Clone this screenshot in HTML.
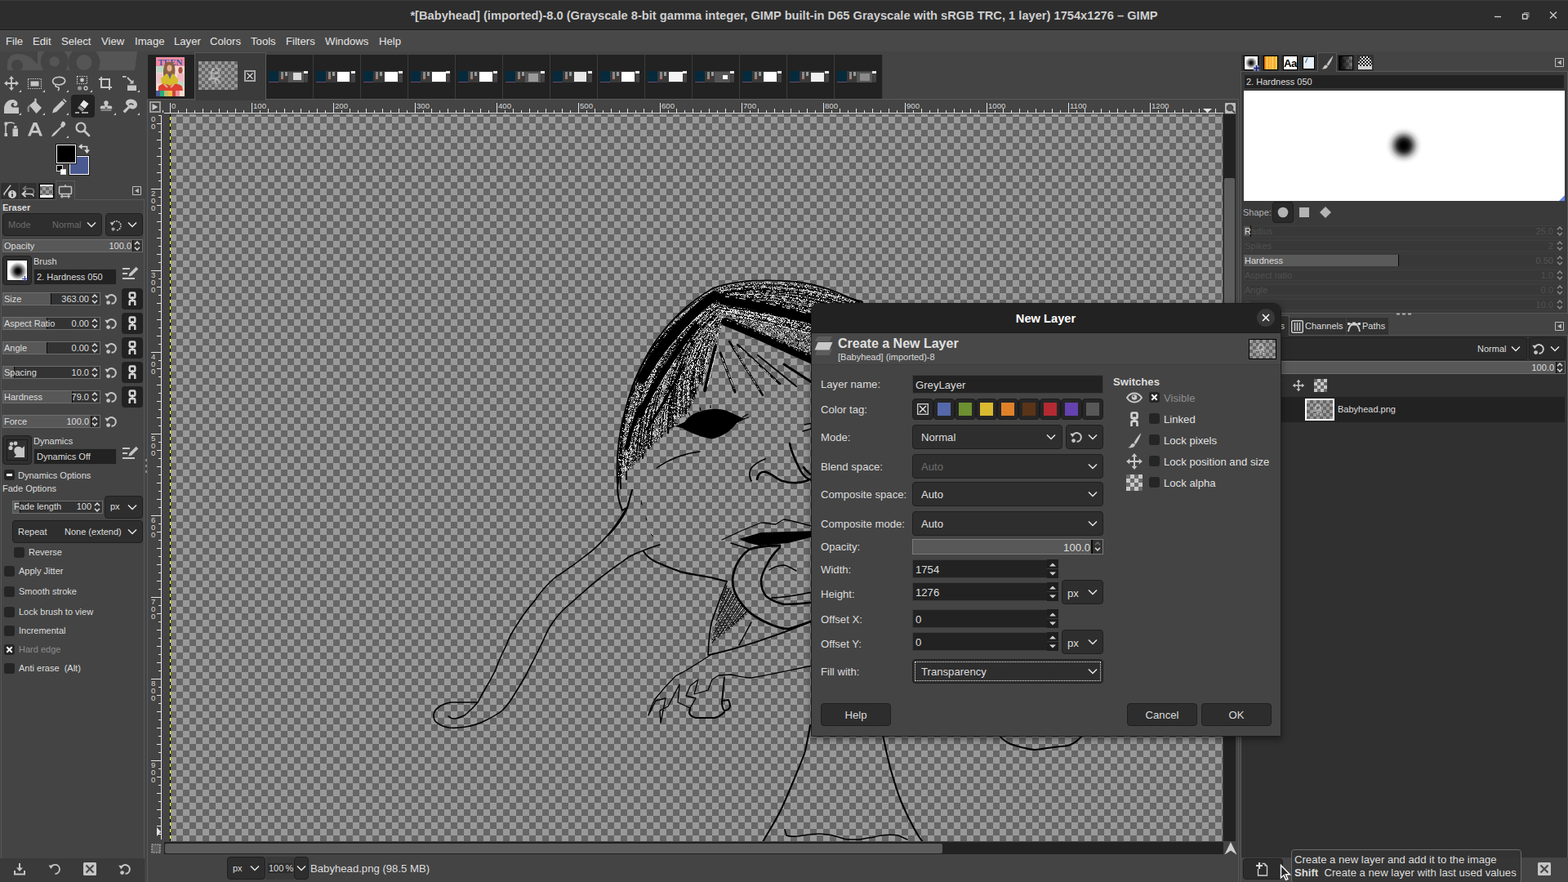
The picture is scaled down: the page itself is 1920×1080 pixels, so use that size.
<!DOCTYPE html>
<html lang="en">
<head>
<meta charset="utf-8">
<title>GIMP</title>
<style>
*{box-sizing:border-box;margin:0;padding:0}
html,body{width:1920px;height:1080px;overflow:hidden;background:#444}
body{position:relative;font-family:"Liberation Sans",sans-serif;font-size:13.150px;color:#dcdcdc;line-height:1;-webkit-font-smoothing:antialiased}
.abs{position:absolute}
.t{position:absolute;white-space:nowrap;line-height:1}
.s11{font-size:11px}
.b{font-weight:bold}
svg{position:absolute;overflow:visible}
/* title bar */
#titlebar{position:absolute;left:0;top:0;width:1920px;height:37px;background:#2d2d2d;border-top:1px solid #3b3b3b;border-bottom:1px solid #1c1c1c}
#titlebar .title{position:absolute;left:0;width:1920px;top:11px;text-align:center;font-weight:bold;font-size:14.67px;color:#cfcfcf;white-space:nowrap}
/* menubar */
#menubar{position:absolute;left:0;top:37px;width:1920px;height:26px;background:#484848;border-top:1px solid #4c4c4c}
#menubar span{position:absolute;top:6px;font-size:13.150px;color:#e4e4e4;white-space:nowrap}
/* generic widgets */
.combo{position:absolute;background:#2e2e2e;border:1px solid #1f1f1f;border-radius:4px}
.entry{position:absolute;background:#222;border:1px solid #3c3c3c}
.scale{position:absolute;background:#333;border:1px solid #6e6e6e}
.scale .fill{position:absolute;left:0;top:0;bottom:0;background:#585858}
.scale .cur{position:absolute;top:0;bottom:0;width:1px;background:#0a0a0a}
.cb{position:absolute;width:13px;height:13px;background:#252525;border-radius:3px}
.btn{position:absolute;background:#2d2d2d;border:1px solid #1f1f1f;border-radius:4px;text-align:center}

/* toolbox */
#toolbox{position:absolute;left:0;top:0}
.ic{fill:#c6c6c6}
.row{position:absolute;left:3px;width:120px;height:16px}
.lbl{position:absolute;left:1px;top:2px;font-size:11px;white-space:nowrap;color:#dcdcdc}
.val{position:absolute;right:13px;top:2px;font-size:11px;white-space:nowrap;color:#dcdcdc}
.linkb{position:absolute;left:149px;width:26px;height:26px;background:#222;border-radius:4px}
.chk{position:absolute;font-size:11px;white-space:nowrap;color:#dcdcdc}
.vr{width:6px;white-space:normal;word-break:break-all;line-height:9px;font-size:9.600px;color:#d6d6d6}
</style>
</head>
<body>
<svg width="0" height="0" style="position:absolute"><defs>
<symbol id="chev" viewBox="0 0 12 8"><path d="M1 1.5l5 5 5-5" fill="none" stroke="#e6e6e6" stroke-width="1.5"/></symbol>
<symbol id="spin" viewBox="0 0 10 14"><path d="M2 5.200l3-3 3 3M2 8.800l3 3 3-3" fill="none" stroke="#d8d8d8" stroke-width="1.600"/></symbol>
<symbol id="reset" viewBox="0 0 16 16"><path d="M3.400 6.400A5.400 5.400 0 1 1 8.500 13.800" fill="none" stroke="#c6c6c6" stroke-width="2"/><path d="M0.300 3.800l6 .3-3 4.400z" fill="#c6c6c6"/><circle cx="4.600" cy="12.600" r="2.400" fill="#c6c6c6"/></symbol>
<symbol id="chain" viewBox="0 0 10 18"><rect x="1.500" y="1.500" width="7" height="6.600" rx="1.300" fill="none" stroke="#d4d4d4" stroke-width="2.600"/><path d="M1.500 18V13.600Q1.500 11.600 3.500 11.600H6.500Q8.500 11.600 8.500 13.600V18" fill="none" stroke="#d4d4d4" stroke-width="2.600"/><path d="M5 6.500V13" stroke="#d4d4d4" stroke-width="2.200"/></symbol>
<symbol id="edit" viewBox="0 0 22 20"><path d="M1 4h9M1 10h6M1 16h15" stroke="#c6c6c6" stroke-width="2.2" fill="none"/><path d="M8.5 13.6l1-3.6 8.2-8.2 2.6 2.6-8.200 8.200z" fill="#c6c6c6"/></symbol>
<symbol id="menub" viewBox="0 0 11 11"><path d="M.5.5h10v10h-10z" fill="none" stroke="#bdbdbd"/><path d="M7.8 2.6v5.800l-4.600-2.900z" fill="#bdbdbd"/></symbol>
<pattern id="ck4" width="8" height="8" patternUnits="userSpaceOnUse"><rect width="8" height="8" fill="#666"/><rect width="4" height="4" fill="#999"/><rect x="4" y="4" width="4" height="4" fill="#999"/></pattern><pattern id="ck4d" width="8" height="8" patternUnits="userSpaceOnUse"><rect width="8" height="8" fill="#565656"/><rect width="4" height="4" fill="#7c7c7c"/><rect x="4" y="4" width="4" height="4" fill="#7c7c7c"/></pattern>
</defs></svg>
<!-- TITLEBAR -->
<div id="titlebar">
<div class="title">*[Babyhead] (imported)-8.0 (Grayscale 8-bit gamma integer, GIMP built-in D65 Grayscale with sRGB TRC, 1 layer) 1754x1276 – GIMP</div>
<svg style="left:1824px;top:7px" width="90" height="22" viewBox="0 0 90 22"><g stroke="#d0d0d0" stroke-width="1.300" fill="none"><path d="M6 12.500h8"/><path d="M40.500 9.500h5.500v5.500h-5.500z"/><path d="M42.500 9.500v-2h5.500v5.500h-2" stroke="#9a9a9a" stroke-width="1"/><path d="M74 6.500l8 8M82 6.500l-8 8"/></g></svg>
</div>
<!-- MENUBAR -->
<div id="menubar">
<span style="left:7px">File</span><span style="left:40px">Edit</span><span style="left:75px">Select</span><span style="left:124px">View</span><span style="left:165px">Image</span><span style="left:213px">Layer</span><span style="left:257px">Colors</span><span style="left:307px">Tools</span><span style="left:350px">Filters</span><span style="left:398px">Windows</span><span style="left:464px">Help</span>
</div>
<!--TOOLBOX-->
<div id="toolbox">
<!-- wilber drop area -->
<svg style="left:0;top:63px" width="178" height="23" viewBox="0 63 178 23"><defs><clipPath id="wc"><rect x="0" y="63" width="178" height="23"/></clipPath></defs><g clip-path="url(#wc)"><path d="M46 63H168L165 86H46z" fill="#555"/><path d="M9 86V80Q9 66 22 66Q35 66 43 76L54 86z" fill="#555"/><circle cx="21" cy="80" r="7" fill="#444"/><circle cx="66.700" cy="75.400" r="17" fill="#444"/><circle cx="66.700" cy="75.400" r="6.200" fill="#555"/><circle cx="103" cy="76.500" r="19.500" fill="#444"/><circle cx="103" cy="76.500" r="9.500" fill="#555"/></g></svg>
<!-- selected tool bg -->
<div class="abs" style="left:87px;top:116px;width:29px;height:28px;background:#222;border-radius:4px"></div>
<!-- row1 -->
<svg style="left:4px;top:92px" width="20" height="20" viewBox="0 0 20 20"><path class="ic" d="M10 1l3.200 3.800h-2.300v4.300h4.300V6.800L19 10l-3.800 3.200v-2.300h-4.300v4.300h2.300L10 19l-3.200-3.800h2.300v-4.300H4.800v2.300L1 10l3.800-3.200v2.300h4.300V4.800H6.800z"/></svg>
<svg style="left:33px;top:92px" width="20" height="20" viewBox="0 0 20 20"><rect x="1.500" y="4.500" width="16" height="12" fill="none" stroke="#c6c6c6" stroke-width="1.200" stroke-dasharray="1.500 1.200"/><rect class="ic" x="4.500" y="7.500" width="10" height="6"/></svg>
<svg style="left:62px;top:92px" width="20" height="20" viewBox="0 0 20 20"><path d="M6.500 11.500C1 10 1 3.500 9 2.500c8-1 10.500 4.500 7 7.500-2.500 2-6 2.200-8.500 1.500-2.500-.5-2 3 .5 3s3 2.500 1 4.500" fill="none" stroke="#c6c6c6" stroke-width="1.700"/></svg>
<svg style="left:91px;top:92px" width="20" height="20" viewBox="0 0 20 20"><rect x="3.500" y="1.500" width="12" height="9" fill="none" stroke="#c6c6c6" stroke-width="1.200" stroke-dasharray="1.500 1.200"/><circle class="ic" cx="9.500" cy="6" r="2.400"/><circle cx="6.500" cy="16" r="2.500" fill="#9a9a9a"/><circle cx="14" cy="16" r="2" fill="none" stroke="#c6c6c6" stroke-width="1.300"/></svg>
<svg style="left:119px;top:92px" width="20" height="20" viewBox="0 0 20 20"><path d="M5 2v13h13M2 5h13v13" fill="none" stroke="#c6c6c6" stroke-width="2"/></svg>
<svg style="left:148px;top:92px" width="20" height="20" viewBox="0 0 20 20"><path class="ic" d="M2 1h4.500v1.800H2zM8 12.500h11V19H8z"/><path d="M8 3l6 6" stroke="#c6c6c6" stroke-width="1.800" fill="none"/><path class="ic" d="M15.500 5.500v5h-5z"/></svg>
<!-- row2 -->
<svg style="left:4px;top:120px" width="20" height="20" viewBox="0 0 20 20"><path class="ic" d="M1 19V11.500C2 6 6 2 11 2c4 0 6.500 2.500 6.500 5 0 2-1.500 3-3 3-1.200 0-2-.8-2-1.800 0-1 .7-1.500 1.500-1.500-1-1-3-1-4 .5-1 1.500-.5 3.500 1.500 4.300H19V19z"/></svg>
<svg style="left:33px;top:120px" width="20" height="20" viewBox="0 0 20 20"><path class="ic" d="M3 9l6.500-5.500L18 12l-6.500 7z"/><path d="M10.500 1.500v9" stroke="#c6c6c6" stroke-width="2.200" stroke-linecap="round"/><path d="M3.500 9.500c-2 1.500-2.500 4-1.500 7.500" stroke="#8a8a8a" stroke-width="2.400" fill="none"/></svg>
<svg style="left:62px;top:120px" width="20" height="20" viewBox="0 0 20 20"><path class="ic" d="M2 18.500l1.500-5L14 3l3.500 3.500L7 17zM15 2l1.200-1.200 3.500 3.500L18.500 5.500z"/></svg>
<svg style="left:91px;top:120px" width="20" height="20" viewBox="0 0 20 20"><path d="M11.500 2.500l6 4.500-4.500 6-6-4.500z" fill="#e8e8e8"/><path d="M6.300 9.300l6 4.500-2.300 3-6-4.500z" fill="#8c8c8c"/><path d="M1 18h5M9 18h8" stroke="#d0d0d0" stroke-width="1.500"/></svg>
<svg style="left:122px;top:122px" width="16" height="16" viewBox="0 0 20 20"><path class="ic" d="M10 1.500c2.200 0 3.500 1.600 3.500 3.500 0 1.800-1.500 2.500-1.500 4.500h4.500c1.500 0 2.500 1 2.500 2.500V14H1v-2c0-1.500 1-2.500 2.500-2.500H8C8 7.500 6.500 6.800 6.500 5c0-1.900 1.300-3.500 3.500-3.500zM2 15.500h16V17H2z"/><path d="M7.500 11.500h5l-2.500 2.500z" fill="#484848"/></svg>
<svg style="left:149px;top:120px" width="20" height="20" viewBox="0 0 20 20"><path class="ic" d="M11 1.500c5 0 8 3 8 6.500s-3 5.500-6 5.500c-1.500 0-2-1-3.500-1L4 18.500 1.500 16 8 10c-1-1-3-1.500-3-4 0-2.500 2.500-4.500 6-4.500z"/><path d="M9 8c1.500-1 4-1 5.500.5" stroke="#484848" stroke-width="1.500" fill="none"/></svg>
<!-- row3 -->
<svg style="left:4px;top:148px" width="20" height="20" viewBox="0 0 20 20"><path d="M3 17V4c3-2.500 8-2.500 11-.5" fill="none" stroke="#c6c6c6" stroke-width="1.500"/><path class="ic" d="M1.500 1.500h3.500v4H1.500zM1.500 15h3.500v4H1.500zM11.500 9.500h6.500V19h-6.500zM13 6h3.500v3H13z"/></svg>
<svg style="left:33px;top:148px" width="20" height="20" viewBox="0 0 20 20"><path class="ic" d="M7.800 2h4.400L19 18.500h-3.600l-1.400-3.800H6l-1.400 3.800H1zM10 5.500l-2.900 6.400h5.800z"/></svg>
<svg style="left:62px;top:148px" width="20" height="20" viewBox="0 0 20 20"><path class="ic" d="M14 1c2-1.200 5 1.500 4 4l-3 3.500-1-1-8.500 9.500c-1 1-2.500 1.500-3.500 2.500l-1-1c1-1 1.500-2.500 2.500-3.500l9.500-8.500-1-1z"/></svg>
<svg style="left:91px;top:148px" width="20" height="20" viewBox="0 0 20 20"><circle cx="8" cy="8" r="5.500" fill="none" stroke="#c6c6c6" stroke-width="2.200"/><path d="M12 12l6 6" stroke="#c6c6c6" stroke-width="2.800" stroke-linecap="round"/></svg>
<!-- group corner marks -->
<svg style="left:0;top:63px" width="178" height="120" viewBox="0 0 178 120"><g fill="#c6c6c6"><path d="M26 47v3h-3zM55 47v3h-3zM84 47v3h-3zM113 47v3h-3zM171 47v3h-3zM26 75v3h-3zM55 75v3h-3zM84 75v3h-3zM142 75v3h-3zM171 75v3h-3zM84 103v3h-3z"/></g></svg>
<!-- fg/bg -->
<div class="abs" style="left:85px;top:191px;width:24px;height:23px;background:#4a5a90;border:1px solid #fff;outline:1px solid #1a1a1a"></div>
<div class="abs" style="left:69px;top:177px;width:24px;height:23px;background:#000;border:1px solid #fff;outline:1px solid #1a1a1a"></div>
<svg style="left:96px;top:176px" width="14" height="12" viewBox="0 0 14 12"><path d="M3 3.500h7.500V11" fill="none" stroke="#d8d8d8" stroke-width="1.600"/><path d="M4.500 0v7L0 3.500zM7 7.500h7L10.500 12z" fill="#d8d8d8"/></svg>
<div class="abs" style="left:69px;top:202px;width:8px;height:8px;background:#000;border:1px solid #ddd"></div>
<div class="abs" style="left:74px;top:207px;width:7px;height:7px;background:#fff;border:1px solid #ddd"></div>
<!-- tool option tabs -->
<div class="abs" style="left:1px;top:224px;width:67px;height:21px;background:#303030"></div>
<div class="abs" style="left:23px;top:224px;width:1px;height:21px;background:#444"></div>
<div class="abs" style="left:45px;top:224px;width:1px;height:21px;background:#484848"></div>
<div class="abs" style="left:1px;top:244px;width:176px;height:836px;border:1px solid #585858;border-bottom:none"></div>
<div class="abs" style="left:68px;top:221px;width:24px;height:24px;background:#444;border:1px solid #5a5a5a;border-bottom:none"></div>
<svg style="left:3px;top:226px" width="18" height="18" viewBox="0 0 18 18"><path d="M1.500 12L10 .8" stroke="#c6c6c6" stroke-width="1.600"/><path d="M1 14l1.500-2.500 1 .8z" fill="#c6c6c6"/><circle cx="12" cy="12" r="5" fill="#d0d0d0"/><path d="M12 11v4M12 8.500v1.300" stroke="#303030" stroke-width="1.700"/></svg>
<svg style="left:26px;top:227px" width="18" height="16" viewBox="0 0 18 16"><path d="M3.500 4h8c3 0 4 2 4 3.500s-1 3.500-4 3.500" fill="none" stroke="#777" stroke-width="1.700"/><path d="M6 .8L2.500 4 6 7.200" fill="none" stroke="#777" stroke-width="1.700"/><path d="M2 10.500h9c3 0 4 1 4 3" fill="none" stroke="#d0d0d0" stroke-width="1.700"/><path d="M5.500 7L1.500 10.500l4 3.500" fill="none" stroke="#d0d0d0" stroke-width="1.700"/></svg>
<svg style="left:48px;top:225px" width="18" height="18" viewBox="0 0 18 18"><rect x="0" y="0" width="18" height="18" fill="#000"/><rect x="1" y="1" width="16" height="16" fill="#fff"/><rect x="1" y="3" width="16" height="11" fill="url(#ck4)"/></svg>
<svg style="left:71px;top:225px" width="18" height="18" viewBox="0 0 18 18"><rect x="1.500" y="3.500" width="15" height="9" rx="1" fill="none" stroke="#c6c6c6" stroke-width="1.500"/><path d="M3 15.500h12M5 12.500v5M13 12.500v5M9 1v2.500" stroke="#c6c6c6" stroke-width="1.400" fill="none"/></svg>
<svg style="left:162px;top:228px" width="11" height="11"><use href="#menub"/></svg>
<div class="t s11 b" style="left:3px;top:249px">Eraser</div>
<!-- mode combo -->
<div class="combo" style="left:3px;top:261px;width:122px;height:28px"></div>
<div class="t s11" style="left:10px;top:270px;color:#6c6c6c">Mode</div>
<div class="t s11" style="left:64px;top:270px;color:#6c6c6c">Normal</div>
<svg style="left:106px;top:271px" width="12" height="8"><use href="#chev"/></svg>
<div class="combo" style="left:129px;top:261px;width:46px;height:28px"></div>
<svg style="left:134px;top:268px" width="16" height="16" viewBox="0 0 16 16"><path d="M3.200 6.200A5.600 5.600 0 1 1 8.500 14" fill="none" stroke="#c6c6c6" stroke-width="1.600" stroke-dasharray="2 1"/><path d="M0.600 4.200l5.200.2-2.600 3.900z" fill="#c6c6c6"/><circle cx="4.600" cy="12.600" r="2.100" fill="#a0a0a0"/></svg>
<svg style="left:156px;top:271px" width="12" height="8"><use href="#chev"/></svg>
<!-- opacity -->
<div class="scale" style="left:3px;top:293px;width:172px;height:16px"><div class="fill" style="width:158px"></div><div class="cur" style="left:158px"></div><div class="lbl">Opacity</div><div class="val">100.0</div></div>
<svg style="left:163px;top:294px" width="10" height="14"><use href="#spin"/></svg>
<!-- brush -->
<div class="combo" style="left:3px;top:313px;width:36px;height:36px"></div>
<div class="abs" style="left:8px;top:318px;width:26px;height:26px;background:radial-gradient(circle at 13px 13px,#000 0,#111 3px,#fff 11px) #fff;border:1px solid #1a1a1a"></div>
<svg style="left:27px;top:338px" width="7" height="7" viewBox="0 0 7 7"><path d="M3.500 0v7M0 3.500h7" stroke="#2a3a9a" stroke-width="1.200"/></svg>
<div class="t s11" style="left:41px;top:315px">Brush</div>
<div class="entry" style="left:41px;top:329px;width:102px;height:20px;border-color:#404040"></div>
<div class="t s11" style="left:45px;top:334px">2. Hardness 050</div>
<svg style="left:149px;top:325px" width="22" height="20"><use href="#edit"/></svg>
<div class="scale" style="left:3px;top:358px;width:120px;height:16px"><div class="fill" style="width:58px"></div><div class="cur" style="left:58px"></div><div class="lbl">Size</div><div class="val">363.00</div></div>
<svg style="left:111px;top:359px" width="10" height="14"><use href="#spin"/></svg>
<svg style="left:128px;top:358px" width="16" height="16"><use href="#reset"/></svg>
<div class="linkb" style="top:353px"></div><svg style="left:157px;top:357px" width="10" height="17"><use href="#chain"/></svg>
<div class="scale" style="left:3px;top:388px;width:120px;height:16px"><div class="fill" style="width:53px"></div><div class="cur" style="left:53px"></div><div class="lbl">Aspect Ratio</div><div class="val">0.00</div></div>
<svg style="left:111px;top:389px" width="10" height="14"><use href="#spin"/></svg>
<svg style="left:128px;top:388px" width="16" height="16"><use href="#reset"/></svg>
<div class="linkb" style="top:383px"></div><svg style="left:157px;top:387px" width="10" height="17"><use href="#chain"/></svg>
<div class="scale" style="left:3px;top:418px;width:120px;height:16px"><div class="fill" style="width:53px"></div><div class="cur" style="left:53px"></div><div class="lbl">Angle</div><div class="val">0.00</div></div>
<svg style="left:111px;top:419px" width="10" height="14"><use href="#spin"/></svg>
<svg style="left:128px;top:418px" width="16" height="16"><use href="#reset"/></svg>
<div class="linkb" style="top:413px"></div><svg style="left:157px;top:417px" width="10" height="17"><use href="#chain"/></svg>
<div class="scale" style="left:3px;top:448px;width:120px;height:16px"><div class="fill" style="width:13px"></div><div class="cur" style="left:13px"></div><div class="lbl">Spacing</div><div class="val">10.0</div></div>
<svg style="left:111px;top:449px" width="10" height="14"><use href="#spin"/></svg>
<svg style="left:128px;top:448px" width="16" height="16"><use href="#reset"/></svg>
<div class="linkb" style="top:443px"></div><svg style="left:157px;top:447px" width="10" height="17"><use href="#chain"/></svg>
<div class="scale" style="left:3px;top:478px;width:120px;height:16px"><div class="fill" style="width:84px"></div><div class="cur" style="left:84px"></div><div class="lbl">Hardness</div><div class="val">79.0</div></div>
<svg style="left:111px;top:479px" width="10" height="14"><use href="#spin"/></svg>
<svg style="left:128px;top:478px" width="16" height="16"><use href="#reset"/></svg>
<div class="linkb" style="top:473px"></div><svg style="left:157px;top:477px" width="10" height="17"><use href="#chain"/></svg>
<div class="scale" style="left:3px;top:508px;width:120px;height:16px"><div class="fill" style="width:107px"></div><div class="cur" style="left:107px"></div><div class="lbl">Force</div><div class="val">100.0</div></div>
<svg style="left:111px;top:509px" width="10" height="14"><use href="#spin"/></svg>
<svg style="left:128px;top:508px" width="16" height="16"><use href="#reset"/></svg>
<div class="combo" style="left:3px;top:533px;width:36px;height:36px"></div>
<div class="abs" style="left:8px;top:538px;width:26px;height:26px;background:#303030;border:1px solid #1a1a1a"></div>
<svg style="left:9px;top:539px" width="24" height="24" viewBox="0 0 24 24"><g fill="#c6c6c6"><circle cx="5" cy="4.500" r="2.300"/><circle cx="10" cy="4" r="2.400"/><circle cx="4" cy="9.500" r="2.600"/><path d="M9 10c2-3 7-3 9 0l3-3v14H8l3-3c-2.500-2-3.500-5-2-8z"/></g></svg>
<div class="t s11" style="left:41px;top:535px">Dynamics</div>
<div class="entry" style="left:41px;top:549px;width:102px;height:20px;border-color:#404040"></div>
<div class="t s11" style="left:45px;top:554px">Dynamics Off</div>
<svg style="left:149px;top:545px" width="22" height="20"><use href="#edit"/></svg>
<div class="abs" style="left:5px;top:575px;width:13px;height:13px;background:#252525;border-radius:3px"></div>
<div class="abs" style="left:8px;top:580px;width:7px;height:3px;background:#fff"></div>
<div class="t s11" style="left:22px;top:577px">Dynamics Options</div>
<div class="t s11" style="left:3px;top:593px">Fade Options</div>
<div class="scale" style="left:15px;top:613px;width:111px;height:16px"><div class="fill" style="width:8px"></div><div class="cur" style="left:8px"></div><div class="lbl" style="top:1px">Fade length</div><div class="val" style="top:1px">100</div></div>
<svg style="left:114px;top:614px" width="10" height="14"><use href="#spin"/></svg>
<div class="combo" style="left:128px;top:607px;width:47px;height:28px"></div>
<div class="t s11" style="left:135px;top:615px">px</div>
<svg style="left:156px;top:617px" width="12" height="8"><use href="#chev"/></svg>
<div class="combo" style="left:15px;top:637px;width:160px;height:28px"></div>
<div class="t s11" style="left:22px;top:646px">Repeat</div>
<div class="t s11" style="left:79px;top:646px">None (extend)</div>
<svg style="left:156px;top:647px" width="12" height="8"><use href="#chev"/></svg>

<div class="cb" style="left:17px;top:670px"></div>
<div class="chk" style="left:35px;top:671px;color:#dcdcdc">Reverse</div>
<div class="cb" style="left:5px;top:693px"></div>
<div class="chk" style="left:23px;top:694px;color:#dcdcdc">Apply Jitter</div>
<div class="cb" style="left:5px;top:718px"></div>
<div class="chk" style="left:23px;top:719px;color:#dcdcdc">Smooth stroke</div>
<div class="cb" style="left:5px;top:743px"></div>
<div class="chk" style="left:23px;top:744px;color:#dcdcdc">Lock brush to view</div>
<div class="cb" style="left:5px;top:766px"></div>
<div class="chk" style="left:23px;top:767px;color:#dcdcdc">Incremental</div>
<div class="cb" style="left:5px;top:789px"></div>
<svg style="left:5px;top:789px" width="13" height="13" viewBox="0 0 13 13"><path d="M3.300 3.300l6.400 6.400M9.700 3.300l-6.400 6.400" stroke="#fff" stroke-width="2"/></svg>
<div class="chk" style="left:23px;top:790px;color:#8c8c8c">Hard edge</div>
<div class="cb" style="left:5px;top:812px"></div>
<div class="chk" style="left:23px;top:813px;color:#dcdcdc">Anti erase&nbsp; (Alt)</div>
<div class="abs" style="left:0;top:1051px;width:177px;height:29px;background:#3a3a3a"></div>
<svg style="left:16px;top:1056px" width="16" height="16" viewBox="0 0 16 16"><path d="M8 1v7" stroke="#c6c6c6" stroke-width="2"/><path d="M4 6.500h8L8 11z" fill="#c6c6c6"/><path d="M2 10v4.500h12V10" fill="none" stroke="#c6c6c6" stroke-width="2"/></svg>
<svg style="left:59px;top:1056px" width="16" height="16" viewBox="0 0 16 16"><path d="M3.200 6.200A5.600 5.600 0 1 1 8.500 14" fill="none" stroke="#c6c6c6" stroke-width="1.800"/><path d="M0.600 3.500l5.600.2-2.800 4.200z" fill="#c6c6c6"/></svg>
<svg style="left:102px;top:1056px" width="16" height="16" viewBox="0 0 16 16"><rect x="0" y="0" width="16" height="16" rx="1.500" fill="#c6c6c6"/><path d="M3.500 3.500l9 9M12.500 3.500l-9 9" stroke="#484848" stroke-width="2.200"/></svg>
<svg style="left:145px;top:1056px" width="16" height="16"><use href="#reset"/></svg>
</div>
<svg style="left:178px;top:562px" width="3" height="18" viewBox="0 0 3 18"><path d="M0 0h2v3h-2zM0 7h2v3h-2zM0 14h2v3h-2z" fill="#8a8a8a"/></svg>
<!--/TOOLBOX-->
<!--IMAGETABS-->
<div id="imgtabs">
<div class="abs" style="left:180px;top:121px;width:1336px;height:959px;background:#444;border-left:1px solid #5a5a5a;border-top:1px solid #5a5a5a"></div>
<div class="abs" style="left:181px;top:67px;width:899px;height:54px;background:#222"></div>
<div class="abs" style="left:325px;top:67px;width:1px;height:54px;background:#3c3c3c"></div>
<div class="abs" style="left:383px;top:67px;width:1px;height:54px;background:#3c3c3c"></div>
<div class="abs" style="left:441px;top:67px;width:1px;height:54px;background:#3c3c3c"></div>
<div class="abs" style="left:499px;top:67px;width:1px;height:54px;background:#3c3c3c"></div>
<div class="abs" style="left:557px;top:67px;width:1px;height:54px;background:#3c3c3c"></div>
<div class="abs" style="left:615px;top:67px;width:1px;height:54px;background:#3c3c3c"></div>
<div class="abs" style="left:673px;top:67px;width:1px;height:54px;background:#3c3c3c"></div>
<div class="abs" style="left:731px;top:67px;width:1px;height:54px;background:#3c3c3c"></div>
<div class="abs" style="left:789px;top:67px;width:1px;height:54px;background:#3c3c3c"></div>
<div class="abs" style="left:847px;top:67px;width:1px;height:54px;background:#3c3c3c"></div>
<div class="abs" style="left:905px;top:67px;width:1px;height:54px;background:#3c3c3c"></div>
<div class="abs" style="left:963px;top:67px;width:1px;height:54px;background:#3c3c3c"></div>
<div class="abs" style="left:1021px;top:67px;width:1px;height:54px;background:#3c3c3c"></div>
<div class="abs" style="left:1080px;top:67px;width:1px;height:54px;background:#3c3c3c"></div>
<div class="abs" style="left:238px;top:64px;width:88px;height:59px;background:#3b3b3b;border:1px solid #5a5a5a;border-bottom:none"></div>
<svg style="left:191px;top:70px" width="35" height="48" viewBox="0 0 35 48"><rect width="35" height="48" fill="#f3d9d2"/><rect x="0" y="0" width="35" height="11" fill="#f08aa2"/><text x="17.500" y="9.600" text-anchor="middle" font-family="Liberation Serif,serif" font-weight="bold" font-size="10.500" textLength="30" lengthAdjust="spacingAndGlyphs" fill="#3b55a6">TEEN</text><rect x="1" y="11" width="10" height="8" fill="#9fd6c0" opacity=".7"/><rect x="1" y="20" width="7" height="12" fill="#e8b0c8" opacity=".6"/><rect x="26" y="20" width="8" height="10" fill="#f0a8b8" opacity=".7"/><rect x="26" y="30" width="8" height="6" fill="#a8d8c0" opacity=".7"/><path d="M11 8c-2 5-3 12-1 18l5 2 6-2c3-5 3-12 1-18-3-3-8-3-11 0z" fill="#8a6040"/><ellipse cx="16.500" cy="13.500" rx="3" ry="4" fill="#e2b090"/><ellipse cx="30" cy="16" rx="2.600" ry="4" fill="#a55040"/><path d="M6 26l7-6 4 3 4-3 6 7-1 11H8z" fill="#d4bc2c"/><path d="M15 21l2 6 2-6z" fill="#4a5aa0"/><path d="M3 36c4-4 9-4 14-1 5-3 11-3 15 1l1 5H3z" fill="#dc4030"/><path d="M10 33l4 4M22 33l-4 4" stroke="#e2b090" stroke-width="2"/><rect x="0" y="41" width="5" height="7" fill="#4a5796"/><rect x="5" y="41" width="5" height="7" fill="#27ad78"/><rect x="10" y="41" width="5" height="7" fill="#c4bb6e"/><rect x="15" y="41" width="5" height="7" fill="#f0bd44"/><rect x="20" y="41" width="4" height="7" fill="#c9473c"/><rect x="24" y="41" width="5" height="7" fill="#f4909c"/><rect x="29" y="41" width="6" height="7" fill="#f2dfd0"/></svg>
<svg style="left:243px;top:75px" width="48" height="35" viewBox="0 0 48 35"><rect width="48" height="35" fill="url(#ck4)"/><path d="M19 9c-3 2-4 6-3 10M21 8c3 1 5 4 4 8M16 14c2 1 5 1 8 0M14 19c3 2 8 2 12 0M12 22c4-1 8-1 13 1M20 23l2 5M24 24l3 1" stroke="#c8c8c8" stroke-width="1.600" fill="none" opacity=".75"/></svg>
<svg style="left:299px;top:86px" width="14" height="14" viewBox="0 0 14 14"><rect x="1" y="1" width="12" height="12" fill="#333" stroke="#a8a8a8" stroke-width="2"/><path d="M3.500 3.500l7 7M10.500 3.500l-7 7" stroke="#d8d8d8" stroke-width="1.300"/></svg>
<svg style="left:329px;top:87px" width="48" height="14" viewBox="0 0 48 14"><rect width="48" height="14" fill="#3a3a3a"/><rect width="12" height="13" fill="#062a3c"/><rect x="0" y="13" width="12" height="1" fill="#6a4a6a"/><rect x="15" y="1" width="3" height="9" fill="#8a8a8a"/><rect x="20" y="1" width="3" height="5" fill="#9a9a9a"/><rect x="16" y="8" width="1.500" height="2" fill="#e06030"/><rect x="24" y="1" width="19" height="13" fill="#555"/><rect x="30" y="2" width="10" height="9" fill="#d8d8d8"/><rect x="43" y="0" width="5" height="3" fill="#e8e8e8"/><rect x="44" y="4" width="4" height="9" fill="#444"/></svg>
<svg style="left:387px;top:87px" width="48" height="14" viewBox="0 0 48 14"><rect width="48" height="14" fill="#3a3a3a"/><rect width="12" height="13" fill="#062a3c"/><rect x="0" y="13" width="12" height="1" fill="#6a4a6a"/><rect x="15" y="1" width="3" height="9" fill="#8a8a8a"/><rect x="20" y="1" width="3" height="5" fill="#9a9a9a"/><rect x="16" y="8" width="1.500" height="2" fill="#e06030"/><rect x="26" y="1" width="15" height="12" fill="#fff"/><rect x="43" y="0" width="5" height="3" fill="#e8e8e8"/><rect x="44" y="4" width="4" height="9" fill="#444"/></svg>
<svg style="left:445px;top:87px" width="48" height="14" viewBox="0 0 48 14"><rect width="48" height="14" fill="#3a3a3a"/><rect width="12" height="13" fill="#062a3c"/><rect x="0" y="13" width="12" height="1" fill="#6a4a6a"/><rect x="15" y="1" width="3" height="9" fill="#8a8a8a"/><rect x="20" y="1" width="3" height="5" fill="#9a9a9a"/><rect x="16" y="8" width="1.500" height="2" fill="#e06030"/><rect x="26" y="1" width="16" height="12" fill="#fff"/><rect x="43" y="0" width="5" height="3" fill="#e8e8e8"/><rect x="44" y="4" width="4" height="9" fill="#444"/></svg>
<svg style="left:503px;top:87px" width="48" height="14" viewBox="0 0 48 14"><rect width="48" height="14" fill="#3a3a3a"/><rect width="12" height="13" fill="#062a3c"/><rect x="0" y="13" width="12" height="1" fill="#6a4a6a"/><rect x="15" y="1" width="3" height="9" fill="#8a8a8a"/><rect x="20" y="1" width="3" height="5" fill="#9a9a9a"/><rect x="16" y="8" width="1.500" height="2" fill="#e06030"/><rect x="26" y="1" width="17" height="12" fill="#fff"/><rect x="43" y="0" width="5" height="3" fill="#e8e8e8"/><rect x="44" y="4" width="4" height="9" fill="#444"/></svg>
<svg style="left:561px;top:87px" width="48" height="14" viewBox="0 0 48 14"><rect width="48" height="14" fill="#3a3a3a"/><rect width="12" height="13" fill="#062a3c"/><rect x="0" y="13" width="12" height="1" fill="#6a4a6a"/><rect x="15" y="1" width="3" height="9" fill="#8a8a8a"/><rect x="20" y="1" width="3" height="5" fill="#9a9a9a"/><rect x="16" y="8" width="1.500" height="2" fill="#e06030"/><rect x="26" y="1" width="16" height="12" fill="#fff"/><rect x="43" y="0" width="5" height="3" fill="#e8e8e8"/><rect x="44" y="4" width="4" height="9" fill="#444"/></svg>
<svg style="left:619px;top:87px" width="48" height="14" viewBox="0 0 48 14"><rect width="48" height="14" fill="#3a3a3a"/><rect width="12" height="13" fill="#062a3c"/><rect x="0" y="13" width="12" height="1" fill="#6a4a6a"/><rect x="15" y="1" width="3" height="9" fill="#8a8a8a"/><rect x="20" y="1" width="3" height="5" fill="#9a9a9a"/><rect x="16" y="8" width="1.500" height="2" fill="#e06030"/><rect x="24" y="1" width="19" height="13" fill="#555"/><rect x="28" y="3" width="12" height="10" fill="#9a9a9a"/><rect x="43" y="0" width="5" height="3" fill="#e8e8e8"/><rect x="44" y="4" width="4" height="9" fill="#444"/></svg>
<svg style="left:677px;top:87px" width="48" height="14" viewBox="0 0 48 14"><rect width="48" height="14" fill="#3a3a3a"/><rect width="12" height="13" fill="#062a3c"/><rect x="0" y="13" width="12" height="1" fill="#6a4a6a"/><rect x="15" y="1" width="3" height="9" fill="#8a8a8a"/><rect x="20" y="1" width="3" height="5" fill="#9a9a9a"/><rect x="16" y="8" width="1.500" height="2" fill="#e06030"/><rect x="26" y="1" width="15" height="12" fill="#e8e8e8"/><rect x="43" y="0" width="5" height="3" fill="#e8e8e8"/><rect x="44" y="4" width="4" height="9" fill="#444"/></svg>
<svg style="left:735px;top:87px" width="48" height="14" viewBox="0 0 48 14"><rect width="48" height="14" fill="#3a3a3a"/><rect width="12" height="13" fill="#062a3c"/><rect x="0" y="13" width="12" height="1" fill="#6a4a6a"/><rect x="15" y="1" width="3" height="9" fill="#8a8a8a"/><rect x="20" y="1" width="3" height="5" fill="#9a9a9a"/><rect x="16" y="8" width="1.500" height="2" fill="#e06030"/><rect x="26" y="1" width="16" height="12" fill="#fff"/><rect x="43" y="0" width="5" height="3" fill="#e8e8e8"/><rect x="44" y="4" width="4" height="9" fill="#444"/></svg>
<svg style="left:793px;top:87px" width="48" height="14" viewBox="0 0 48 14"><rect width="48" height="14" fill="#3a3a3a"/><rect width="12" height="13" fill="#062a3c"/><rect x="0" y="13" width="12" height="1" fill="#6a4a6a"/><rect x="15" y="1" width="3" height="9" fill="#8a8a8a"/><rect x="20" y="1" width="3" height="5" fill="#9a9a9a"/><rect x="16" y="8" width="1.500" height="2" fill="#e06030"/><rect x="26" y="1" width="17" height="12" fill="#f4f4f4"/><rect x="43" y="0" width="5" height="3" fill="#e8e8e8"/><rect x="44" y="4" width="4" height="9" fill="#444"/></svg>
<svg style="left:851px;top:87px" width="48" height="14" viewBox="0 0 48 14"><rect width="48" height="14" fill="#3a3a3a"/><rect width="12" height="13" fill="#062a3c"/><rect x="0" y="13" width="12" height="1" fill="#6a4a6a"/><rect x="15" y="1" width="3" height="9" fill="#8a8a8a"/><rect x="20" y="1" width="3" height="5" fill="#9a9a9a"/><rect x="16" y="8" width="1.500" height="2" fill="#e06030"/><rect x="24" y="1" width="19" height="13" fill="#555"/><rect x="34" y="5" width="6" height="5" fill="#fff"/><rect x="43" y="0" width="5" height="3" fill="#e8e8e8"/><rect x="44" y="4" width="4" height="9" fill="#444"/></svg>
<svg style="left:909px;top:87px" width="48" height="14" viewBox="0 0 48 14"><rect width="48" height="14" fill="#3a3a3a"/><rect width="12" height="13" fill="#062a3c"/><rect x="0" y="13" width="12" height="1" fill="#6a4a6a"/><rect x="15" y="1" width="3" height="9" fill="#8a8a8a"/><rect x="20" y="1" width="3" height="5" fill="#9a9a9a"/><rect x="16" y="8" width="1.500" height="2" fill="#e06030"/><rect x="26" y="1" width="16" height="12" fill="#fff"/><rect x="43" y="0" width="5" height="3" fill="#e8e8e8"/><rect x="44" y="4" width="4" height="9" fill="#444"/></svg>
<svg style="left:967px;top:87px" width="48" height="14" viewBox="0 0 48 14"><rect width="48" height="14" fill="#3a3a3a"/><rect width="12" height="13" fill="#062a3c"/><rect x="0" y="13" width="12" height="1" fill="#6a4a6a"/><rect x="15" y="1" width="3" height="9" fill="#8a8a8a"/><rect x="20" y="1" width="3" height="5" fill="#9a9a9a"/><rect x="16" y="8" width="1.500" height="2" fill="#e06030"/><rect x="26" y="2" width="16" height="11" fill="#f0f0f0"/><rect x="43" y="0" width="5" height="3" fill="#e8e8e8"/><rect x="44" y="4" width="4" height="9" fill="#444"/></svg>
<svg style="left:1025px;top:87px" width="48" height="14" viewBox="0 0 48 14"><rect width="48" height="14" fill="#3a3a3a"/><rect width="12" height="13" fill="#062a3c"/><rect x="0" y="13" width="12" height="1" fill="#6a4a6a"/><rect x="15" y="1" width="3" height="9" fill="#8a8a8a"/><rect x="20" y="1" width="3" height="5" fill="#9a9a9a"/><rect x="16" y="8" width="1.500" height="2" fill="#e06030"/><rect x="24" y="1" width="19" height="13" fill="#555"/><rect x="28" y="3" width="12" height="9" fill="#8a8a8a"/><rect x="43" y="0" width="5" height="3" fill="#e8e8e8"/><rect x="44" y="4" width="4" height="9" fill="#444"/></svg>
</div>
<!--/IMAGETABS-->
<!--CANVAS-->
<div id="canvas">
<svg style="left:183px;top:124px" width="14" height="14" viewBox="0 0 14 14"><rect x="1" y="1" width="12" height="12" fill="none" stroke="#9c9c9c" stroke-width="2"/><path d="M3.500 3v8l7-4z" fill="#c8c8c8"/></svg>
<svg style="left:198px;top:122px" width="1300" height="18" viewBox="198 122 1300 18" shape-rendering="crispEdges"><rect x="201" y="138" width="1297" height="1" fill="#e4e4e4"/><path d="M199 135h1v3h-1zM208 126h1v12h-1zM218 135h1v3h-1zM228 133h1v5h-1zM238 135h1v3h-1zM248 133h1v5h-1zM258 135h1v3h-1zM268 133h1v5h-1zM278 135h1v3h-1zM288 133h1v5h-1zM298 135h1v3h-1zM308 126h1v12h-1zM318 135h1v3h-1zM328 133h1v5h-1zM338 135h1v3h-1zM348 133h1v5h-1zM358 135h1v3h-1zM368 133h1v5h-1zM378 135h1v3h-1zM388 133h1v5h-1zM398 135h1v3h-1zM408 126h1v12h-1zM418 135h1v3h-1zM428 133h1v5h-1zM438 135h1v3h-1zM448 133h1v5h-1zM458 135h1v3h-1zM468 133h1v5h-1zM478 135h1v3h-1zM488 133h1v5h-1zM498 135h1v3h-1zM508 126h1v12h-1zM518 135h1v3h-1zM528 133h1v5h-1zM538 135h1v3h-1zM548 133h1v5h-1zM558 135h1v3h-1zM568 133h1v5h-1zM578 135h1v3h-1zM588 133h1v5h-1zM598 135h1v3h-1zM608 126h1v12h-1zM618 135h1v3h-1zM628 133h1v5h-1zM638 135h1v3h-1zM648 133h1v5h-1zM658 135h1v3h-1zM668 133h1v5h-1zM678 135h1v3h-1zM688 133h1v5h-1zM698 135h1v3h-1zM708 126h1v12h-1zM718 135h1v3h-1zM728 133h1v5h-1zM738 135h1v3h-1zM748 133h1v5h-1zM758 135h1v3h-1zM768 133h1v5h-1zM778 135h1v3h-1zM788 133h1v5h-1zM798 135h1v3h-1zM808 126h1v12h-1zM818 135h1v3h-1zM828 133h1v5h-1zM838 135h1v3h-1zM848 133h1v5h-1zM858 135h1v3h-1zM868 133h1v5h-1zM878 135h1v3h-1zM888 133h1v5h-1zM898 135h1v3h-1zM908 126h1v12h-1zM918 135h1v3h-1zM928 133h1v5h-1zM938 135h1v3h-1zM948 133h1v5h-1zM958 135h1v3h-1zM968 133h1v5h-1zM978 135h1v3h-1zM988 133h1v5h-1zM998 135h1v3h-1zM1008 126h1v12h-1zM1018 135h1v3h-1zM1028 133h1v5h-1zM1038 135h1v3h-1zM1048 133h1v5h-1zM1058 135h1v3h-1zM1068 133h1v5h-1zM1078 135h1v3h-1zM1088 133h1v5h-1zM1098 135h1v3h-1zM1108 126h1v12h-1zM1118 135h1v3h-1zM1128 133h1v5h-1zM1138 135h1v3h-1zM1148 133h1v5h-1zM1158 135h1v3h-1zM1168 133h1v5h-1zM1178 135h1v3h-1zM1188 133h1v5h-1zM1198 135h1v3h-1zM1208 126h1v12h-1zM1218 135h1v3h-1zM1228 133h1v5h-1zM1238 135h1v3h-1zM1248 133h1v5h-1zM1258 135h1v3h-1zM1268 133h1v5h-1zM1278 135h1v3h-1zM1288 133h1v5h-1zM1298 135h1v3h-1zM1308 126h1v12h-1zM1318 135h1v3h-1zM1328 133h1v5h-1zM1338 135h1v3h-1zM1348 133h1v5h-1zM1358 135h1v3h-1zM1368 133h1v5h-1zM1378 135h1v3h-1zM1388 133h1v5h-1zM1398 135h1v3h-1zM1408 126h1v12h-1zM1418 135h1v3h-1zM1428 133h1v5h-1zM1438 135h1v3h-1zM1448 133h1v5h-1zM1458 135h1v3h-1zM1468 133h1v5h-1zM1478 135h1v3h-1zM1488 133h1v5h-1z" fill="#e4e4e4"/><path d="M1473 133h11l-5.500 5z" fill="#e4e4e4" shape-rendering="auto"/></svg>
<div class="t" style="left:210px;top:125px;font-size:9.600px;color:#d6d6d6">0</div>
<div class="t" style="left:310px;top:125px;font-size:9.600px;color:#d6d6d6">100</div>
<div class="t" style="left:410px;top:125px;font-size:9.600px;color:#d6d6d6">200</div>
<div class="t" style="left:510px;top:125px;font-size:9.600px;color:#d6d6d6">300</div>
<div class="t" style="left:610px;top:125px;font-size:9.600px;color:#d6d6d6">400</div>
<div class="t" style="left:710px;top:125px;font-size:9.600px;color:#d6d6d6">500</div>
<div class="t" style="left:810px;top:125px;font-size:9.600px;color:#d6d6d6">600</div>
<div class="t" style="left:910px;top:125px;font-size:9.600px;color:#d6d6d6">700</div>
<div class="t" style="left:1010px;top:125px;font-size:9.600px;color:#d6d6d6">800</div>
<div class="t" style="left:1110px;top:125px;font-size:9.600px;color:#d6d6d6">900</div>
<div class="t" style="left:1210px;top:125px;font-size:9.600px;color:#d6d6d6">1000</div>
<div class="t" style="left:1310px;top:125px;font-size:9.600px;color:#d6d6d6">1100</div>
<div class="t" style="left:1410px;top:125px;font-size:9.600px;color:#d6d6d6">1200</div>
<svg style="left:181px;top:140px" width="18" height="890" viewBox="181 140 18 890" shape-rendering="crispEdges"><rect x="197" y="141" width="1" height="887" fill="#e4e4e4"/><path d="M194 141h3v1h-3zM192 151h5v1h-5zM194 161h3v1h-3zM192 171h5v1h-5zM194 181h3v1h-3zM192 191h5v1h-5zM194 201h3v1h-3zM192 211h5v1h-5zM194 221h3v1h-3zM185 231h12v1h-12zM194 241h3v1h-3zM192 251h5v1h-5zM194 261h3v1h-3zM192 271h5v1h-5zM194 281h3v1h-3zM192 291h5v1h-5zM194 301h3v1h-3zM192 311h5v1h-5zM194 321h3v1h-3zM185 331h12v1h-12zM194 341h3v1h-3zM192 351h5v1h-5zM194 361h3v1h-3zM192 371h5v1h-5zM194 381h3v1h-3zM192 391h5v1h-5zM194 401h3v1h-3zM192 411h5v1h-5zM194 421h3v1h-3zM185 431h12v1h-12zM194 441h3v1h-3zM192 451h5v1h-5zM194 461h3v1h-3zM192 471h5v1h-5zM194 481h3v1h-3zM192 491h5v1h-5zM194 501h3v1h-3zM192 511h5v1h-5zM194 521h3v1h-3zM185 531h12v1h-12zM194 541h3v1h-3zM192 551h5v1h-5zM194 561h3v1h-3zM192 571h5v1h-5zM194 581h3v1h-3zM192 591h5v1h-5zM194 601h3v1h-3zM192 611h5v1h-5zM194 621h3v1h-3zM185 631h12v1h-12zM194 641h3v1h-3zM192 651h5v1h-5zM194 661h3v1h-3zM192 671h5v1h-5zM194 681h3v1h-3zM192 691h5v1h-5zM194 701h3v1h-3zM192 711h5v1h-5zM194 721h3v1h-3zM185 731h12v1h-12zM194 741h3v1h-3zM192 751h5v1h-5zM194 761h3v1h-3zM192 771h5v1h-5zM194 781h3v1h-3zM192 791h5v1h-5zM194 801h3v1h-3zM192 811h5v1h-5zM194 821h3v1h-3zM185 831h12v1h-12zM194 841h3v1h-3zM192 851h5v1h-5zM194 861h3v1h-3zM192 871h5v1h-5zM194 881h3v1h-3zM192 891h5v1h-5zM194 901h3v1h-3zM192 911h5v1h-5zM194 921h3v1h-3zM185 931h12v1h-12zM194 941h3v1h-3zM192 951h5v1h-5zM194 961h3v1h-3zM192 971h5v1h-5zM194 981h3v1h-3zM192 991h5v1h-5zM194 1001h3v1h-3zM192 1011h5v1h-5zM194 1021h3v1h-3z" fill="#e4e4e4"/><path d="M192 1013l5 5.500-5 5.500z" fill="#e4e4e4" shape-rendering="auto"/></svg>
<div class="abs" style="left:183px;top:140px;width:12px;height:30px;overflow:hidden"><div class="t vr" style="left:2px;top:-8px">100</div></div>
<div class="t vr" style="left:185px;top:232px">200</div>
<div class="t vr" style="left:185px;top:332px">300</div>
<div class="t vr" style="left:185px;top:432px">400</div>
<div class="t vr" style="left:185px;top:532px">500</div>
<div class="t vr" style="left:185px;top:632px">600</div>
<div class="t vr" style="left:185px;top:732px">700</div>
<div class="t vr" style="left:185px;top:832px">800</div>
<div class="t vr" style="left:185px;top:932px">900</div>
<div class="abs" id="cv" style="left:209px;top:140px;width:1288px;height:890px;background-color:#666;background-image:conic-gradient(#999 25%,#666 0 50%,#999 0 75%,#666 0);background-size:16px 16px;background-position:7px -13px;overflow:hidden"><!--SK0--><svg style="left:0;top:0" width="1288" height="890" viewBox="209 140 1288 890"><g fill="none" stroke="#000" stroke-linecap="round"><path d="M876 388Q823 423 824 522" stroke-width="2"/><path d="M876 384Q824 431 828 509" stroke-width="2.5"/><path d="M880 365Q765 415 767 587" stroke-width="2"/><path d="M879 369Q772 422 762 582" stroke-width="1"/><path d="M878 390Q825 433 833 508" stroke-width="1"/><path d="M873 394Q847 428 847 482" stroke-width="1.2"/><path d="M872 381Q820 425 818 530" stroke-width="2.5"/><path d="M879 382Q812 424 812 525" stroke-width="1.5"/><path d="M871 396Q852 426 849 476" stroke-width="2"/><path d="M880 373Q792 422 782 564" stroke-width="1"/><path d="M880 366Q750 416 760 598" stroke-width="2"/><path d="M873 394Q842 426 840 500" stroke-width="1.2"/><path d="M878 378Q814 427 811 521" stroke-width="1"/><path d="M878 406Q859 437 861 458" stroke-width="2"/><path d="M882 373Q806 429 789 550" stroke-width="2"/><path d="M878 364Q780 420 763 569" stroke-width="1.5"/><path d="M871 407Q848 427 857 468" stroke-width="2"/><path d="M873 402Q843 423 846 487" stroke-width="1.5"/><path d="M875 388Q817 425 819 513" stroke-width="1.5"/><path d="M875 407Q859 426 863 458" stroke-width="1.2"/><path d="M877 399Q846 427 852 480" stroke-width="1"/><path d="M882 369Q779 425 767 578" stroke-width="1.2"/><path d="M881 382Q815 430 810 535" stroke-width="2"/><path d="M874 357Q757 416 761 586" stroke-width="1.2"/><path d="M877 408Q857 435 860 464" stroke-width="1"/><path d="M872 385Q833 422 832 506" stroke-width="2"/><path d="M874 393Q841 429 845 497" stroke-width="1.2"/><path d="M874 399Q836 428 845 497" stroke-width="1"/><path d="M873 403Q857 435 857 466" stroke-width="1"/><path d="M872 399Q842 426 852 482" stroke-width="1.5"/><path d="M879 388Q817 423 814 528" stroke-width="1"/><path d="M875 377Q806 425 797 544" stroke-width="2.5"/><path d="M881 367Q782 417 774 559" stroke-width="2.5"/><path d="M880 368Q778 419 769 569" stroke-width="1.5"/><path d="M878 372Q798 427 794 549" stroke-width="2"/><path d="M878 398Q847 434 848 489" stroke-width="1"/><path d="M876 382Q822 420 821 520" stroke-width="2"/><path d="M880 393Q834 424 840 506" stroke-width="2.5"/><path d="M871 403Q855 426 860 472" stroke-width="1.2"/><path d="M880 396Q828 422 836 504" stroke-width="1.5"/><path d="M881 379Q815 424 807 528" stroke-width="1"/><path d="M874 369Q791 426 778 563" stroke-width="2.5"/><path d="M880 394Q839 429 851 488" stroke-width="1.2"/><path d="M875 410Q851 432 857 466" stroke-width="2"/><path d="M878 376Q792 424 787 561" stroke-width="2"/><path d="M874 366Q759 426 757 591" stroke-width="1"/><path d="M877 388Q831 432 831 506" stroke-width="1.2"/><path d="M881 382Q805 424 791 546" stroke-width="1"/><path d="M874 377Q788 420 783 562" stroke-width="1"/><path d="M876 361Q761 421 757 591" stroke-width="2"/><path d="M879 390Q839 432 844 499" stroke-width="2"/><path d="M879 372Q794 424 775 563" stroke-width="1"/><path d="M881 374Q796 429 790 554" stroke-width="1"/><path d="M879 398Q845 428 851 471" stroke-width="1.5"/><path d="M882 378Q960 383 1056 414" stroke-width="1.2"/><path d="M884 377Q960 384 1056 413" stroke-width="1"/><path d="M884 381Q960 399 1056 423" stroke-width="1.2"/><path d="M884 361Q960 355 1056 384" stroke-width="1.2"/><path d="M886 382Q960 391 1056 426" stroke-width="1"/><path d="M882 364Q960 357 1056 389" stroke-width="1.2"/><path d="M884 372Q960 377 1056 407" stroke-width="1.2"/><path d="M885 364Q960 356 1056 389" stroke-width="1"/><path d="M881 361Q960 343 1056 379" stroke-width="2"/><path d="M883 361Q960 346 1056 380" stroke-width="1"/><path d="M883 376Q960 379 1056 414" stroke-width="1.5"/><path d="M885 369Q960 364 1056 395" stroke-width="2"/><path d="M886 382Q960 396 1056 421" stroke-width="1"/><path d="M884 372Q960 372 1056 405" stroke-width="1"/><path d="M885 367Q960 358 1056 386" stroke-width="2.5"/><path d="M886 367Q960 355 1056 390" stroke-width="2"/><path d="M887 363Q960 348 1056 386" stroke-width="1.2"/><path d="M887 373Q960 375 1056 403" stroke-width="1.5"/><path d="M886 379Q960 393 1056 420" stroke-width="2.5"/><path d="M884 358Q960 347 1056 375" stroke-width="2.5"/><path d="M882 382Q960 395 1056 422" stroke-width="1"/><path d="M884 367Q960 366 1056 395" stroke-width="1.2"/><path d="M886 357Q960 339 1056 370" stroke-width="2"/><path d="M886 381Q960 389 1056 419" stroke-width="1.5"/><path d="M884 378Q960 393 1056 418" stroke-width="2.5"/><path d="M882 363Q960 345 1056 383" stroke-width="1"/><path d="M887 364Q960 355 1056 390" stroke-width="1.2"/><path d="M886 365Q960 355 1056 392" stroke-width="1.5"/><path d="M883 360Q960 344 1056 378" stroke-width="1.5"/><path d="M885 380Q960 387 1056 415" stroke-width="1.2"/><path d="M882 382Q960 396 1056 429" stroke-width="1"/><path d="M887 367Q960 369 1056 394" stroke-width="1"/><path d="M883 374Q960 371 1056 403" stroke-width="1.5"/><path d="M882 385Q960 395 1056 425" stroke-width="1.2"/><path d="M884 385Q960 398 1056 424" stroke-width="2"/><path d="M886 359Q960 338 1056 371" stroke-width="2"/><path d="M884 379Q960 388 1056 416" stroke-width="2.5"/><path d="M885 378Q960 381 1056 413" stroke-width="2"/><path d="M886 364Q960 353 1056 383" stroke-width="1.2"/><path d="M886 364Q960 351 1056 385" stroke-width="1.2"/><path d="M884 374Q960 372 1056 406" stroke-width="1.2"/><path d="M886 373Q960 377 1056 406" stroke-width="1"/><path d="M884 358Q960 343 1056 377" stroke-width="1.2"/><path d="M884 374Q960 378 1056 403" stroke-width="2.5"/><path d="M884 378Q960 386 1056 417" stroke-width="2"/><path d="M885 364Q960 355 1056 383" stroke-width="1"/><path d="M885 366Q960 360 1056 388" stroke-width="1.2"/><path d="M887 368Q960 367 1056 400" stroke-width="1"/><path d="M884 354Q960 337 1056 370" stroke-width="2"/><path d="M881 370Q960 365 1056 392" stroke-width="2.5"/></g><g fill="none" stroke="#fff" stroke-width="1"><path d="M877 391Q835 426 838 498" stroke-dasharray="7 2 3 7 5 1 1 2"/><path d="M873 370Q784 423 770 562" stroke-dasharray="5 3 5 7 2 3 5 7"/><path d="M870 417Q865 435 866 449" stroke-dasharray="1 1 1 1 1 1 7 1"/><path d="M879 387Q828 430 829 509" stroke-dasharray="2 2 2 2 3 2 2 1"/><path d="M881 382Q805 425 787 553" stroke-dasharray="2 1 3 1 1 3 7 1"/><path d="M878 406Q863 435 861 468" stroke-dasharray="1 3 3 2 7 7 2 2"/><path d="M875 392Q839 430 842 489" stroke-dasharray="5 2 7 2 7 1 2 1"/><path d="M875 400Q836 430 840 500" stroke-dasharray="3 1 1 2 5 2 2 1"/><path d="M880 374Q784 420 778 561" stroke-dasharray="7 2 3 1 1 3 1 5"/><path d="M876 405Q854 436 852 471" stroke-dasharray="2 2 3 3 3 2 3 3"/><path d="M875 392Q831 426 831 511" stroke-dasharray="2 1 2 2 1 7 2 3"/><path d="M876 400Q842 431 844 491" stroke-dasharray="2 2 5 2 3 2 5 5"/><path d="M878 370Q766 421 766 581" stroke-dasharray="1 2 5 2 1 3 5 2"/><path d="M875 361Q775 417 767 576" stroke-dasharray="7 5 2 1 7 1 3 5"/><path d="M876 396Q832 430 830 513" stroke-dasharray="2 1 5 2 2 3 2 5"/><path d="M877 406Q848 428 853 474" stroke-dasharray="1 2 1 3 2 7 3 3"/><path d="M871 387Q828 425 832 500" stroke-dasharray="1 1 1 3 5 1 5 1"/><path d="M877 381Q822 429 815 521" stroke-dasharray="7 1 5 1 3 1 5 2"/><path d="M873 379Q817 426 812 527" stroke-dasharray="2 7 7 3 7 7 7 1"/><path d="M873 374Q806 424 795 545" stroke-dasharray="2 3 7 5 7 1 2 5"/><path d="M876 374Q790 420 777 558" stroke-dasharray="5 2 2 7 7 1 1 2"/><path d="M881 379Q797 424 790 550" stroke-dasharray="1 1 2 5 5 2 2 1"/><path d="M880 365Q774 424 766 575" stroke-dasharray="2 2 2 1 2 5 3 1"/><path d="M882 373Q779 417 769 568" stroke-dasharray="2 7 2 3 1 7 3 3"/><path d="M875 358Q770 426 762 587" stroke-dasharray="1 3 2 1 5 7 7 2"/><path d="M878 394Q837 427 836 497" stroke-dasharray="1 1 5 5 1 1 5 7"/><path d="M870 405Q854 428 849 480" stroke-dasharray="2 7 2 5 1 2 2 3"/><path d="M875 366Q766 417 758 583" stroke-dasharray="1 7 2 7 1 2 3 5"/><path d="M872 380Q806 427 806 537" stroke-dasharray="1 5 2 5 1 2 1 2"/><path d="M871 404Q855 434 855 459" stroke-dasharray="7 1 1 7 2 1 3 2"/><path d="M879 408Q862 431 862 466" stroke-dasharray="3 3 1 2 1 2 2 1"/><path d="M881 370Q789 423 773 568" stroke-dasharray="2 2 5 3 7 1 2 7"/><path d="M874 412Q856 434 858 461" stroke-dasharray="2 7 1 5 1 1 7 2"/><path d="M871 415Q859 436 861 455" stroke-dasharray="1 2 7 7 3 1 5 5"/><path d="M875 403Q841 433 842 492" stroke-dasharray="7 1 7 1 1 2 2 3"/><path d="M874 401Q851 435 850 476" stroke-dasharray="2 1 7 1 2 1 5 1"/><path d="M871 396Q839 434 844 495" stroke-dasharray="2 2 2 1 3 2 2 5"/><path d="M875 391Q845 432 842 494" stroke-dasharray="7 1 5 2 1 7 2 5"/><path d="M879 373Q794 426 785 551" stroke-dasharray="1 3 1 2 5 2 3 5"/><path d="M878 379Q815 422 810 523" stroke-dasharray="2 2 2 3 2 5 5 2"/><path d="M878 368Q771 425 761 585" stroke-dasharray="1 2 1 7 2 3 5 1"/><path d="M872 379Q809 430 799 537" stroke-dasharray="3 1 5 1 7 1 7 5"/><path d="M879 366Q782 420 772 566" stroke-dasharray="7 1 5 3 3 1 2 2"/><path d="M873 391Q829 427 825 514" stroke-dasharray="1 3 5 1 2 7 3 2"/><path d="M883 368Q960 369 1056 399" stroke-dasharray="1 2 2 1 3 7 1 2"/><path d="M886 378Q960 387 1056 413" stroke-dasharray="3 1 1 1 2 3 5 1"/><path d="M883 377Q960 386 1056 414" stroke-dasharray="1 2 7 2 7 1 2 2"/><path d="M887 365Q960 359 1056 388" stroke-dasharray="1 2 1 2 1 3 2 7"/><path d="M881 365Q960 357 1056 390" stroke-dasharray="1 3 2 2 1 1 5 2"/><path d="M886 356Q960 338 1056 375" stroke-dasharray="2 3 5 5 1 2 1 2"/><path d="M883 381Q960 392 1056 419" stroke-dasharray="7 1 1 2 7 2 2 1"/><path d="M882 370Q960 369 1056 398" stroke-dasharray="2 2 3 1 2 1 1 1"/><path d="M886 370Q960 365 1056 395" stroke-dasharray="5 1 3 5 3 2 2 5"/><path d="M885 357Q960 345 1056 375" stroke-dasharray="2 2 1 2 3 7 2 1"/><path d="M887 363Q960 357 1056 388" stroke-dasharray="5 5 2 3 1 7 7 5"/><path d="M882 363Q960 353 1056 387" stroke-dasharray="5 1 7 7 2 1 7 5"/><path d="M883 363Q960 349 1056 383" stroke-dasharray="2 2 2 5 2 1 1 2"/><path d="M885 374Q960 380 1056 411" stroke-dasharray="5 2 2 7 1 2 3 2"/><path d="M883 371Q960 370 1056 404" stroke-dasharray="2 1 2 2 1 2 2 7"/><path d="M883 380Q960 396 1056 422" stroke-dasharray="2 2 2 3 2 2 7 5"/><path d="M883 372Q960 378 1056 405" stroke-dasharray="1 3 5 1 7 1 5 1"/><path d="M884 362Q960 354 1056 386" stroke-dasharray="2 2 2 1 7 1 5 3"/><path d="M881 382Q960 398 1056 427" stroke-dasharray="2 1 2 5 1 1 3 1"/><path d="M883 385Q960 397 1056 425" stroke-dasharray="7 3 1 3 7 3 7 5"/><path d="M885 362Q960 345 1056 378" stroke-dasharray="5 1 5 2 5 1 1 7"/><path d="M885 376Q960 379 1056 407" stroke-dasharray="2 2 2 5 5 3 2 1"/><path d="M884 367Q960 368 1056 398" stroke-dasharray="1 1 7 1 5 2 1 7"/><path d="M885 377Q960 389 1056 416" stroke-dasharray="7 2 1 2 2 2 3 5"/><path d="M884 380Q960 390 1056 418" stroke-dasharray="2 1 2 7 7 1 7 3"/><path d="M882 373Q960 380 1056 407" stroke-dasharray="7 2 7 1 1 1 2 3"/><path d="M885 373Q960 376 1056 408" stroke-dasharray="7 1 2 5 2 2 2 5"/><path d="M883 382Q960 400 1056 425" stroke-dasharray="1 7 1 1 2 2 5 3"/><path d="M883 380Q960 392 1056 417" stroke-dasharray="2 1 2 1 2 2 7 7"/><path d="M886 380Q960 395 1056 420" stroke-dasharray="3 2 5 5 1 3 2 7"/><path d="M883 371Q960 369 1056 402" stroke-dasharray="2 2 1 1 2 1 2 3"/><path d="M885 354Q960 335 1056 372" stroke-dasharray="1 2 3 2 3 1 1 1"/><path d="M884 365Q960 359 1056 391" stroke-dasharray="1 7 1 7 2 2 1 2"/><path d="M886 385Q960 397 1056 427" stroke-dasharray="7 3 2 2 1 2 7 1"/><path d="M881 357Q960 341 1056 372" stroke-dasharray="1 1 3 1 5 1 2 2"/><path d="M883 379Q960 389 1056 417" stroke-dasharray="1 2 1 7 3 2 7 1"/></g><defs><pattern id="nz" width="64" height="64" patternUnits="userSpaceOnUse"><path d="M11 0h1v1h-1zM13 0h1v1h-1zM17 0h1v1h-1zM18 0h1v1h-1zM21 0h1v1h-1zM23 0h1v1h-1zM25 0h1v1h-1zM28 0h1v1h-1zM29 0h1v1h-1zM36 0h1v1h-1zM43 0h1v1h-1zM44 0h1v1h-1zM4 1h1v1h-1zM6 1h1v1h-1zM14 1h1v1h-1zM20 1h1v1h-1zM29 1h1v1h-1zM31 1h1v1h-1zM34 1h1v1h-1zM39 1h1v1h-1zM49 1h1v1h-1zM54 1h1v1h-1zM56 1h1v1h-1zM5 2h1v1h-1zM12 2h1v1h-1zM13 2h1v1h-1zM34 2h1v1h-1zM52 2h1v1h-1zM59 2h1v1h-1zM5 3h1v1h-1zM8 3h1v1h-1zM13 3h1v1h-1zM15 3h1v1h-1zM17 3h1v1h-1zM18 3h1v1h-1zM24 3h1v1h-1zM28 3h1v1h-1zM30 3h1v1h-1zM35 3h1v1h-1zM45 3h1v1h-1zM54 3h1v1h-1zM57 3h1v1h-1zM62 3h1v1h-1zM5 4h1v1h-1zM14 4h1v1h-1zM22 4h1v1h-1zM25 4h1v1h-1zM26 4h1v1h-1zM27 4h1v1h-1zM35 4h1v1h-1zM47 4h1v1h-1zM63 4h1v1h-1zM9 5h1v1h-1zM14 5h1v1h-1zM18 5h1v1h-1zM29 5h1v1h-1zM33 5h1v1h-1zM36 5h1v1h-1zM39 5h1v1h-1zM42 5h1v1h-1zM49 5h1v1h-1zM58 5h1v1h-1zM0 6h1v1h-1zM2 6h1v1h-1zM5 6h1v1h-1zM6 6h1v1h-1zM9 6h1v1h-1zM12 6h1v1h-1zM14 6h1v1h-1zM15 6h1v1h-1zM17 6h1v1h-1zM25 6h1v1h-1zM28 6h1v1h-1zM29 6h1v1h-1zM33 6h1v1h-1zM36 6h1v1h-1zM41 6h1v1h-1zM52 6h1v1h-1zM54 6h1v1h-1zM1 7h1v1h-1zM2 7h1v1h-1zM3 7h1v1h-1zM7 7h1v1h-1zM8 7h1v1h-1zM9 7h1v1h-1zM10 7h1v1h-1zM12 7h1v1h-1zM22 7h1v1h-1zM27 7h1v1h-1zM28 7h1v1h-1zM30 7h1v1h-1zM40 7h1v1h-1zM41 7h1v1h-1zM56 7h1v1h-1zM62 7h1v1h-1zM2 8h1v1h-1zM8 8h1v1h-1zM12 8h1v1h-1zM14 8h1v1h-1zM19 8h1v1h-1zM31 8h1v1h-1zM32 8h1v1h-1zM34 8h1v1h-1zM38 8h1v1h-1zM39 8h1v1h-1zM40 8h1v1h-1zM41 8h1v1h-1zM44 8h1v1h-1zM48 8h1v1h-1zM51 8h1v1h-1zM2 9h1v1h-1zM5 9h1v1h-1zM7 9h1v1h-1zM8 9h1v1h-1zM16 9h1v1h-1zM21 9h1v1h-1zM29 9h1v1h-1zM31 9h1v1h-1zM36 9h1v1h-1zM47 9h1v1h-1zM57 9h1v1h-1zM58 9h1v1h-1zM59 9h1v1h-1zM63 9h1v1h-1zM1 10h1v1h-1zM7 10h1v1h-1zM11 10h1v1h-1zM12 10h1v1h-1zM15 10h1v1h-1zM26 10h1v1h-1zM48 10h1v1h-1zM55 10h1v1h-1zM2 11h1v1h-1zM5 11h1v1h-1zM11 11h1v1h-1zM17 11h1v1h-1zM23 11h1v1h-1zM25 11h1v1h-1zM28 11h1v1h-1zM31 11h1v1h-1zM45 11h1v1h-1zM47 11h1v1h-1zM50 11h1v1h-1zM51 11h1v1h-1zM0 12h1v1h-1zM4 12h1v1h-1zM5 12h1v1h-1zM6 12h1v1h-1zM7 12h1v1h-1zM8 12h1v1h-1zM10 12h1v1h-1zM20 12h1v1h-1zM21 12h1v1h-1zM23 12h1v1h-1zM28 12h1v1h-1zM32 12h1v1h-1zM43 12h1v1h-1zM60 12h1v1h-1zM63 12h1v1h-1zM0 13h1v1h-1zM6 13h1v1h-1zM13 13h1v1h-1zM18 13h1v1h-1zM22 13h1v1h-1zM23 13h1v1h-1zM46 13h1v1h-1zM51 13h1v1h-1zM53 13h1v1h-1zM57 13h1v1h-1zM58 13h1v1h-1zM0 14h1v1h-1zM5 14h1v1h-1zM6 14h1v1h-1zM10 14h1v1h-1zM12 14h1v1h-1zM16 14h1v1h-1zM20 14h1v1h-1zM21 14h1v1h-1zM28 14h1v1h-1zM30 14h1v1h-1zM33 14h1v1h-1zM59 14h1v1h-1zM6 15h1v1h-1zM10 15h1v1h-1zM13 15h1v1h-1zM15 15h1v1h-1zM17 15h1v1h-1zM18 15h1v1h-1zM21 15h1v1h-1zM26 15h1v1h-1zM27 15h1v1h-1zM31 15h1v1h-1zM32 15h1v1h-1zM43 15h1v1h-1zM47 15h1v1h-1zM49 15h1v1h-1zM52 15h1v1h-1zM61 15h1v1h-1zM63 15h1v1h-1zM6 16h1v1h-1zM7 16h1v1h-1zM8 16h1v1h-1zM10 16h1v1h-1zM11 16h1v1h-1zM17 16h1v1h-1zM18 16h1v1h-1zM24 16h1v1h-1zM25 16h1v1h-1zM35 16h1v1h-1zM36 16h1v1h-1zM39 16h1v1h-1zM43 16h1v1h-1zM46 16h1v1h-1zM55 16h1v1h-1zM58 16h1v1h-1zM1 17h1v1h-1zM6 17h1v1h-1zM8 17h1v1h-1zM12 17h1v1h-1zM17 17h1v1h-1zM19 17h1v1h-1zM21 17h1v1h-1zM25 17h1v1h-1zM29 17h1v1h-1zM38 17h1v1h-1zM48 17h1v1h-1zM52 17h1v1h-1zM53 17h1v1h-1zM56 17h1v1h-1zM58 17h1v1h-1zM59 17h1v1h-1zM60 17h1v1h-1zM0 18h1v1h-1zM2 18h1v1h-1zM4 18h1v1h-1zM8 18h1v1h-1zM19 18h1v1h-1zM23 18h1v1h-1zM41 18h1v1h-1zM50 18h1v1h-1zM51 18h1v1h-1zM54 18h1v1h-1zM59 18h1v1h-1zM60 18h1v1h-1zM11 19h1v1h-1zM13 19h1v1h-1zM17 19h1v1h-1zM35 19h1v1h-1zM38 19h1v1h-1zM40 19h1v1h-1zM41 19h1v1h-1zM47 19h1v1h-1zM51 19h1v1h-1zM7 20h1v1h-1zM9 20h1v1h-1zM12 20h1v1h-1zM16 20h1v1h-1zM19 20h1v1h-1zM22 20h1v1h-1zM24 20h1v1h-1zM32 20h1v1h-1zM43 20h1v1h-1zM47 20h1v1h-1zM52 20h1v1h-1zM55 20h1v1h-1zM63 20h1v1h-1zM1 21h1v1h-1zM9 21h1v1h-1zM10 21h1v1h-1zM14 21h1v1h-1zM16 21h1v1h-1zM20 21h1v1h-1zM23 21h1v1h-1zM25 21h1v1h-1zM28 21h1v1h-1zM35 21h1v1h-1zM37 21h1v1h-1zM49 21h1v1h-1zM56 21h1v1h-1zM60 21h1v1h-1zM0 22h1v1h-1zM6 22h1v1h-1zM14 22h1v1h-1zM18 22h1v1h-1zM27 22h1v1h-1zM31 22h1v1h-1zM32 22h1v1h-1zM36 22h1v1h-1zM45 22h1v1h-1zM54 22h1v1h-1zM58 22h1v1h-1zM61 22h1v1h-1zM0 23h1v1h-1zM3 23h1v1h-1zM4 23h1v1h-1zM7 23h1v1h-1zM9 23h1v1h-1zM15 23h1v1h-1zM16 23h1v1h-1zM17 23h1v1h-1zM19 23h1v1h-1zM34 23h1v1h-1zM36 23h1v1h-1zM37 23h1v1h-1zM38 23h1v1h-1zM52 23h1v1h-1zM55 23h1v1h-1zM58 23h1v1h-1zM59 23h1v1h-1zM0 24h1v1h-1zM2 24h1v1h-1zM11 24h1v1h-1zM14 24h1v1h-1zM25 24h1v1h-1zM29 24h1v1h-1zM32 24h1v1h-1zM33 24h1v1h-1zM39 24h1v1h-1zM40 24h1v1h-1zM48 24h1v1h-1zM52 24h1v1h-1zM55 24h1v1h-1zM12 25h1v1h-1zM17 25h1v1h-1zM30 25h1v1h-1zM36 25h1v1h-1zM1 26h1v1h-1zM3 26h1v1h-1zM6 26h1v1h-1zM12 26h1v1h-1zM15 26h1v1h-1zM16 26h1v1h-1zM21 26h1v1h-1zM25 26h1v1h-1zM27 26h1v1h-1zM28 26h1v1h-1zM30 26h1v1h-1zM41 26h1v1h-1zM51 26h1v1h-1zM55 26h1v1h-1zM0 27h1v1h-1zM2 27h1v1h-1zM3 27h1v1h-1zM11 27h1v1h-1zM13 27h1v1h-1zM18 27h1v1h-1zM21 27h1v1h-1zM25 27h1v1h-1zM38 27h1v1h-1zM39 27h1v1h-1zM42 27h1v1h-1zM48 27h1v1h-1zM61 27h1v1h-1zM4 28h1v1h-1zM5 28h1v1h-1zM8 28h1v1h-1zM16 28h1v1h-1zM17 28h1v1h-1zM24 28h1v1h-1zM25 28h1v1h-1zM26 28h1v1h-1zM32 28h1v1h-1zM35 28h1v1h-1zM40 28h1v1h-1zM58 28h1v1h-1zM60 28h1v1h-1zM0 29h1v1h-1zM9 29h1v1h-1zM11 29h1v1h-1zM18 29h1v1h-1zM24 29h1v1h-1zM31 29h1v1h-1zM33 29h1v1h-1zM46 29h1v1h-1zM53 29h1v1h-1zM54 29h1v1h-1zM57 29h1v1h-1zM62 29h1v1h-1zM0 30h1v1h-1zM3 30h1v1h-1zM9 30h1v1h-1zM14 30h1v1h-1zM23 30h1v1h-1zM27 30h1v1h-1zM43 30h1v1h-1zM53 30h1v1h-1zM57 30h1v1h-1zM58 30h1v1h-1zM63 30h1v1h-1zM2 31h1v1h-1zM6 31h1v1h-1zM10 31h1v1h-1zM14 31h1v1h-1zM15 31h1v1h-1zM20 31h1v1h-1zM33 31h1v1h-1zM34 31h1v1h-1zM43 31h1v1h-1zM47 31h1v1h-1zM51 31h1v1h-1zM54 31h1v1h-1zM55 31h1v1h-1zM60 31h1v1h-1zM62 31h1v1h-1zM63 31h1v1h-1zM3 32h1v1h-1zM5 32h1v1h-1zM7 32h1v1h-1zM14 32h1v1h-1zM16 32h1v1h-1zM17 32h1v1h-1zM19 32h1v1h-1zM23 32h1v1h-1zM24 32h1v1h-1zM25 32h1v1h-1zM29 32h1v1h-1zM31 32h1v1h-1zM35 32h1v1h-1zM41 32h1v1h-1zM48 32h1v1h-1zM14 33h1v1h-1zM15 33h1v1h-1zM16 33h1v1h-1zM17 33h1v1h-1zM18 33h1v1h-1zM20 33h1v1h-1zM21 33h1v1h-1zM23 33h1v1h-1zM29 33h1v1h-1zM37 33h1v1h-1zM38 33h1v1h-1zM41 33h1v1h-1zM42 33h1v1h-1zM48 33h1v1h-1zM51 33h1v1h-1zM61 33h1v1h-1zM0 34h1v1h-1zM5 34h1v1h-1zM17 34h1v1h-1zM18 34h1v1h-1zM20 34h1v1h-1zM22 34h1v1h-1zM25 34h1v1h-1zM26 34h1v1h-1zM29 34h1v1h-1zM32 34h1v1h-1zM35 34h1v1h-1zM42 34h1v1h-1zM45 34h1v1h-1zM46 34h1v1h-1zM60 34h1v1h-1zM0 35h1v1h-1zM1 35h1v1h-1zM5 35h1v1h-1zM17 35h1v1h-1zM31 35h1v1h-1zM34 35h1v1h-1zM37 35h1v1h-1zM49 35h1v1h-1zM59 35h1v1h-1zM61 35h1v1h-1zM1 36h1v1h-1zM4 36h1v1h-1zM7 36h1v1h-1zM8 36h1v1h-1zM10 36h1v1h-1zM11 36h1v1h-1zM17 36h1v1h-1zM27 36h1v1h-1zM35 36h1v1h-1zM36 36h1v1h-1zM48 36h1v1h-1zM49 36h1v1h-1zM54 36h1v1h-1zM56 36h1v1h-1zM57 36h1v1h-1zM2 37h1v1h-1zM6 37h1v1h-1zM7 37h1v1h-1zM9 37h1v1h-1zM16 37h1v1h-1zM17 37h1v1h-1zM26 37h1v1h-1zM44 37h1v1h-1zM46 37h1v1h-1zM47 37h1v1h-1zM49 37h1v1h-1zM54 37h1v1h-1zM59 37h1v1h-1zM2 38h1v1h-1zM16 38h1v1h-1zM21 38h1v1h-1zM31 38h1v1h-1zM38 38h1v1h-1zM39 38h1v1h-1zM41 38h1v1h-1zM47 38h1v1h-1zM56 38h1v1h-1zM60 38h1v1h-1zM61 38h1v1h-1zM3 39h1v1h-1zM13 39h1v1h-1zM15 39h1v1h-1zM16 39h1v1h-1zM29 39h1v1h-1zM35 39h1v1h-1zM39 39h1v1h-1zM46 39h1v1h-1zM47 39h1v1h-1zM48 39h1v1h-1zM50 39h1v1h-1zM52 39h1v1h-1zM54 39h1v1h-1zM55 39h1v1h-1zM15 40h1v1h-1zM19 40h1v1h-1zM27 40h1v1h-1zM36 40h1v1h-1zM40 40h1v1h-1zM45 40h1v1h-1zM57 40h1v1h-1zM60 40h1v1h-1zM61 40h1v1h-1zM4 41h1v1h-1zM8 41h1v1h-1zM9 41h1v1h-1zM17 41h1v1h-1zM18 41h1v1h-1zM20 41h1v1h-1zM25 41h1v1h-1zM26 41h1v1h-1zM34 41h1v1h-1zM45 41h1v1h-1zM59 41h1v1h-1zM6 42h1v1h-1zM9 42h1v1h-1zM10 42h1v1h-1zM12 42h1v1h-1zM14 42h1v1h-1zM15 42h1v1h-1zM21 42h1v1h-1zM26 42h1v1h-1zM35 42h1v1h-1zM38 42h1v1h-1zM44 42h1v1h-1zM46 42h1v1h-1zM48 42h1v1h-1zM53 42h1v1h-1zM54 42h1v1h-1zM57 42h1v1h-1zM10 43h1v1h-1zM13 43h1v1h-1zM16 43h1v1h-1zM22 43h1v1h-1zM24 43h1v1h-1zM27 43h1v1h-1zM28 43h1v1h-1zM29 43h1v1h-1zM39 43h1v1h-1zM55 43h1v1h-1zM56 43h1v1h-1zM59 43h1v1h-1zM3 44h1v1h-1zM5 44h1v1h-1zM6 44h1v1h-1zM10 44h1v1h-1zM12 44h1v1h-1zM14 44h1v1h-1zM17 44h1v1h-1zM20 44h1v1h-1zM24 44h1v1h-1zM29 44h1v1h-1zM43 44h1v1h-1zM45 44h1v1h-1zM46 44h1v1h-1zM54 44h1v1h-1zM58 44h1v1h-1zM2 45h1v1h-1zM9 45h1v1h-1zM22 45h1v1h-1zM24 45h1v1h-1zM44 45h1v1h-1zM50 45h1v1h-1zM58 45h1v1h-1zM5 46h1v1h-1zM7 46h1v1h-1zM8 46h1v1h-1zM12 46h1v1h-1zM14 46h1v1h-1zM17 46h1v1h-1zM20 46h1v1h-1zM21 46h1v1h-1zM22 46h1v1h-1zM23 46h1v1h-1zM30 46h1v1h-1zM32 46h1v1h-1zM36 46h1v1h-1zM37 46h1v1h-1zM49 46h1v1h-1zM50 46h1v1h-1zM54 46h1v1h-1zM62 46h1v1h-1zM13 47h1v1h-1zM16 47h1v1h-1zM26 47h1v1h-1zM30 47h1v1h-1zM44 47h1v1h-1zM52 47h1v1h-1zM55 47h1v1h-1zM58 47h1v1h-1zM2 48h1v1h-1zM4 48h1v1h-1zM15 48h1v1h-1zM24 48h1v1h-1zM28 48h1v1h-1zM29 48h1v1h-1zM30 48h1v1h-1zM37 48h1v1h-1zM41 48h1v1h-1zM42 48h1v1h-1zM49 48h1v1h-1zM51 48h1v1h-1zM58 48h1v1h-1zM0 49h1v1h-1zM9 49h1v1h-1zM10 49h1v1h-1zM14 49h1v1h-1zM18 49h1v1h-1zM19 49h1v1h-1zM20 49h1v1h-1zM27 49h1v1h-1zM29 49h1v1h-1zM33 49h1v1h-1zM42 49h1v1h-1zM45 49h1v1h-1zM48 49h1v1h-1zM53 49h1v1h-1zM57 49h1v1h-1zM58 49h1v1h-1zM61 49h1v1h-1zM62 49h1v1h-1zM0 50h1v1h-1zM1 50h1v1h-1zM2 50h1v1h-1zM17 50h1v1h-1zM19 50h1v1h-1zM23 50h1v1h-1zM24 50h1v1h-1zM26 50h1v1h-1zM31 50h1v1h-1zM38 50h1v1h-1zM47 50h1v1h-1zM52 50h1v1h-1zM63 50h1v1h-1zM1 51h1v1h-1zM4 51h1v1h-1zM6 51h1v1h-1zM8 51h1v1h-1zM9 51h1v1h-1zM15 51h1v1h-1zM28 51h1v1h-1zM33 51h1v1h-1zM41 51h1v1h-1zM42 51h1v1h-1zM43 51h1v1h-1zM44 51h1v1h-1zM45 51h1v1h-1zM5 52h1v1h-1zM6 52h1v1h-1zM7 52h1v1h-1zM8 52h1v1h-1zM11 52h1v1h-1zM12 52h1v1h-1zM18 52h1v1h-1zM23 52h1v1h-1zM25 52h1v1h-1zM27 52h1v1h-1zM29 52h1v1h-1zM34 52h1v1h-1zM39 52h1v1h-1zM42 52h1v1h-1zM47 52h1v1h-1zM50 52h1v1h-1zM51 52h1v1h-1zM52 52h1v1h-1zM56 52h1v1h-1zM60 52h1v1h-1zM61 52h1v1h-1zM3 53h1v1h-1zM4 53h1v1h-1zM11 53h1v1h-1zM21 53h1v1h-1zM22 53h1v1h-1zM34 53h1v1h-1zM47 53h1v1h-1zM49 53h1v1h-1zM55 53h1v1h-1zM56 53h1v1h-1zM57 53h1v1h-1zM58 53h1v1h-1zM0 54h1v1h-1zM2 54h1v1h-1zM5 54h1v1h-1zM6 54h1v1h-1zM8 54h1v1h-1zM13 54h1v1h-1zM23 54h1v1h-1zM29 54h1v1h-1zM36 54h1v1h-1zM44 54h1v1h-1zM45 54h1v1h-1zM50 54h1v1h-1zM57 54h1v1h-1zM60 54h1v1h-1zM63 54h1v1h-1zM0 55h1v1h-1zM15 55h1v1h-1zM19 55h1v1h-1zM34 55h1v1h-1zM37 55h1v1h-1zM40 55h1v1h-1zM48 55h1v1h-1zM50 55h1v1h-1zM61 55h1v1h-1zM0 56h1v1h-1zM1 56h1v1h-1zM4 56h1v1h-1zM8 56h1v1h-1zM10 56h1v1h-1zM11 56h1v1h-1zM13 56h1v1h-1zM26 56h1v1h-1zM28 56h1v1h-1zM30 56h1v1h-1zM31 56h1v1h-1zM38 56h1v1h-1zM41 56h1v1h-1zM44 56h1v1h-1zM53 56h1v1h-1zM54 56h1v1h-1zM57 56h1v1h-1zM61 56h1v1h-1zM3 57h1v1h-1zM6 57h1v1h-1zM13 57h1v1h-1zM21 57h1v1h-1zM34 57h1v1h-1zM40 57h1v1h-1zM42 57h1v1h-1zM46 57h1v1h-1zM47 57h1v1h-1zM49 57h1v1h-1zM51 57h1v1h-1zM57 57h1v1h-1zM63 57h1v1h-1zM1 58h1v1h-1zM3 58h1v1h-1zM9 58h1v1h-1zM13 58h1v1h-1zM17 58h1v1h-1zM23 58h1v1h-1zM25 58h1v1h-1zM28 58h1v1h-1zM39 58h1v1h-1zM51 58h1v1h-1zM57 58h1v1h-1zM58 58h1v1h-1zM6 59h1v1h-1zM17 59h1v1h-1zM18 59h1v1h-1zM20 59h1v1h-1zM23 59h1v1h-1zM26 59h1v1h-1zM37 59h1v1h-1zM41 59h1v1h-1zM43 59h1v1h-1zM44 59h1v1h-1zM54 59h1v1h-1zM60 59h1v1h-1zM63 59h1v1h-1zM14 60h1v1h-1zM19 60h1v1h-1zM23 60h1v1h-1zM32 60h1v1h-1zM33 60h1v1h-1zM35 60h1v1h-1zM38 60h1v1h-1zM56 60h1v1h-1zM58 60h1v1h-1zM63 60h1v1h-1zM11 61h1v1h-1zM12 61h1v1h-1zM13 61h1v1h-1zM15 61h1v1h-1zM18 61h1v1h-1zM28 61h1v1h-1zM33 61h1v1h-1zM35 61h1v1h-1zM44 61h1v1h-1zM50 61h1v1h-1zM55 61h1v1h-1zM1 62h1v1h-1zM3 62h1v1h-1zM10 62h1v1h-1zM15 62h1v1h-1zM20 62h1v1h-1zM27 62h1v1h-1zM42 62h1v1h-1zM44 62h1v1h-1zM49 62h1v1h-1zM51 62h1v1h-1zM1 63h1v1h-1zM10 63h1v1h-1zM22 63h1v1h-1zM37 63h1v1h-1zM41 63h1v1h-1zM44 63h1v1h-1zM56 63h1v1h-1z" fill="#000"/><path d="M6 0h1v1h-1zM16 0h1v1h-1zM26 0h1v1h-1zM45 0h1v1h-1zM48 0h1v1h-1zM57 0h1v1h-1zM59 0h1v1h-1zM62 0h1v1h-1zM2 1h1v1h-1zM3 1h1v1h-1zM18 1h1v1h-1zM30 1h1v1h-1zM35 1h1v1h-1zM44 1h1v1h-1zM46 1h1v1h-1zM32 2h1v1h-1zM4 3h1v1h-1zM11 3h1v1h-1zM14 3h1v1h-1zM19 3h1v1h-1zM26 3h1v1h-1zM33 3h1v1h-1zM53 3h1v1h-1zM20 4h1v1h-1zM46 4h1v1h-1zM52 4h1v1h-1zM2 5h1v1h-1zM17 5h1v1h-1zM22 5h1v1h-1zM27 5h1v1h-1zM41 5h1v1h-1zM44 5h1v1h-1zM45 5h1v1h-1zM56 5h1v1h-1zM22 6h1v1h-1zM24 6h1v1h-1zM53 6h1v1h-1zM55 6h1v1h-1zM59 6h1v1h-1zM14 7h1v1h-1zM29 7h1v1h-1zM31 7h1v1h-1zM47 7h1v1h-1zM48 7h1v1h-1zM51 7h1v1h-1zM57 7h1v1h-1zM61 7h1v1h-1zM63 7h1v1h-1zM1 8h1v1h-1zM5 8h1v1h-1zM6 8h1v1h-1zM20 8h1v1h-1zM45 8h1v1h-1zM47 8h1v1h-1zM6 9h1v1h-1zM11 9h1v1h-1zM14 9h1v1h-1zM15 9h1v1h-1zM25 9h1v1h-1zM50 9h1v1h-1zM52 9h1v1h-1zM10 10h1v1h-1zM23 10h1v1h-1zM29 10h1v1h-1zM47 10h1v1h-1zM57 10h1v1h-1zM9 11h1v1h-1zM32 11h1v1h-1zM46 11h1v1h-1zM56 11h1v1h-1zM22 12h1v1h-1zM39 12h1v1h-1zM58 12h1v1h-1zM62 12h1v1h-1zM9 13h1v1h-1zM12 13h1v1h-1zM17 13h1v1h-1zM27 13h1v1h-1zM35 13h1v1h-1zM36 13h1v1h-1zM60 13h1v1h-1zM1 14h1v1h-1zM9 14h1v1h-1zM36 14h1v1h-1zM42 14h1v1h-1zM44 14h1v1h-1zM47 14h1v1h-1zM61 14h1v1h-1zM12 15h1v1h-1zM33 15h1v1h-1zM36 15h1v1h-1zM37 15h1v1h-1zM41 15h1v1h-1zM50 15h1v1h-1zM53 15h1v1h-1zM58 15h1v1h-1zM1 16h1v1h-1zM13 16h1v1h-1zM50 16h1v1h-1zM59 16h1v1h-1zM63 16h1v1h-1zM9 17h1v1h-1zM39 17h1v1h-1zM6 18h1v1h-1zM27 18h1v1h-1zM43 18h1v1h-1zM47 18h1v1h-1zM61 18h1v1h-1zM10 19h1v1h-1zM14 19h1v1h-1zM15 19h1v1h-1zM23 19h1v1h-1zM32 19h1v1h-1zM36 19h1v1h-1zM42 19h1v1h-1zM55 19h1v1h-1zM21 20h1v1h-1zM25 20h1v1h-1zM31 20h1v1h-1zM33 20h1v1h-1zM34 20h1v1h-1zM50 20h1v1h-1zM5 21h1v1h-1zM12 21h1v1h-1zM34 21h1v1h-1zM59 21h1v1h-1zM63 21h1v1h-1zM4 22h1v1h-1zM42 22h1v1h-1zM56 22h1v1h-1zM60 22h1v1h-1zM2 23h1v1h-1zM8 23h1v1h-1zM18 23h1v1h-1zM22 23h1v1h-1zM33 23h1v1h-1zM53 23h1v1h-1zM56 23h1v1h-1zM10 24h1v1h-1zM35 24h1v1h-1zM38 24h1v1h-1zM43 24h1v1h-1zM47 24h1v1h-1zM63 24h1v1h-1zM15 25h1v1h-1zM43 25h1v1h-1zM60 25h1v1h-1zM0 26h1v1h-1zM14 26h1v1h-1zM37 26h1v1h-1zM40 26h1v1h-1zM46 26h1v1h-1zM12 27h1v1h-1zM15 27h1v1h-1zM24 27h1v1h-1zM30 27h1v1h-1zM34 27h1v1h-1zM40 27h1v1h-1zM60 27h1v1h-1zM1 28h1v1h-1zM14 28h1v1h-1zM27 28h1v1h-1zM38 28h1v1h-1zM61 28h1v1h-1zM1 29h1v1h-1zM2 29h1v1h-1zM32 29h1v1h-1zM4 30h1v1h-1zM26 30h1v1h-1zM39 30h1v1h-1zM55 30h1v1h-1zM17 31h1v1h-1zM18 31h1v1h-1zM22 31h1v1h-1zM37 31h1v1h-1zM27 32h1v1h-1zM47 32h1v1h-1zM52 32h1v1h-1zM9 33h1v1h-1zM10 33h1v1h-1zM53 33h1v1h-1zM28 34h1v1h-1zM50 34h1v1h-1zM59 34h1v1h-1zM23 35h1v1h-1zM30 36h1v1h-1zM37 36h1v1h-1zM45 36h1v1h-1zM30 37h1v1h-1zM53 37h1v1h-1zM1 38h1v1h-1zM4 38h1v1h-1zM5 38h1v1h-1zM25 38h1v1h-1zM36 38h1v1h-1zM42 38h1v1h-1zM44 38h1v1h-1zM50 38h1v1h-1zM52 38h1v1h-1zM19 39h1v1h-1zM38 39h1v1h-1zM58 39h1v1h-1zM3 40h1v1h-1zM5 40h1v1h-1zM30 40h1v1h-1zM31 40h1v1h-1zM33 40h1v1h-1zM10 41h1v1h-1zM15 41h1v1h-1zM19 41h1v1h-1zM40 41h1v1h-1zM51 41h1v1h-1zM54 41h1v1h-1zM2 42h1v1h-1zM5 42h1v1h-1zM16 42h1v1h-1zM19 42h1v1h-1zM28 42h1v1h-1zM50 42h1v1h-1zM1 43h1v1h-1zM42 43h1v1h-1zM48 43h1v1h-1zM7 44h1v1h-1zM9 44h1v1h-1zM15 44h1v1h-1zM16 44h1v1h-1zM21 44h1v1h-1zM31 44h1v1h-1zM50 44h1v1h-1zM62 44h1v1h-1zM43 45h1v1h-1zM55 45h1v1h-1zM57 45h1v1h-1zM10 46h1v1h-1zM24 46h1v1h-1zM27 46h1v1h-1zM42 46h1v1h-1zM59 46h1v1h-1zM0 47h1v1h-1zM11 47h1v1h-1zM19 47h1v1h-1zM37 47h1v1h-1zM45 47h1v1h-1zM48 47h1v1h-1zM0 48h1v1h-1zM14 48h1v1h-1zM52 48h1v1h-1zM3 49h1v1h-1zM5 49h1v1h-1zM17 49h1v1h-1zM21 49h1v1h-1zM59 49h1v1h-1zM53 50h1v1h-1zM54 50h1v1h-1zM19 51h1v1h-1zM25 51h1v1h-1zM40 51h1v1h-1zM54 51h1v1h-1zM55 51h1v1h-1zM56 51h1v1h-1zM58 51h1v1h-1zM30 52h1v1h-1zM41 52h1v1h-1zM63 52h1v1h-1zM2 53h1v1h-1zM9 53h1v1h-1zM18 53h1v1h-1zM19 54h1v1h-1zM21 54h1v1h-1zM31 54h1v1h-1zM35 54h1v1h-1zM47 54h1v1h-1zM10 55h1v1h-1zM28 55h1v1h-1zM31 55h1v1h-1zM41 55h1v1h-1zM44 55h1v1h-1zM2 56h1v1h-1zM23 56h1v1h-1zM42 56h1v1h-1zM49 56h1v1h-1zM50 56h1v1h-1zM55 56h1v1h-1zM58 56h1v1h-1zM16 57h1v1h-1zM22 57h1v1h-1zM52 57h1v1h-1zM56 57h1v1h-1zM19 58h1v1h-1zM33 58h1v1h-1zM42 58h1v1h-1zM0 59h1v1h-1zM62 59h1v1h-1zM1 60h1v1h-1zM4 60h1v1h-1zM12 60h1v1h-1zM17 60h1v1h-1zM21 60h1v1h-1zM21 61h1v1h-1zM56 61h1v1h-1zM58 61h1v1h-1zM59 61h1v1h-1zM62 61h1v1h-1zM9 62h1v1h-1zM19 62h1v1h-1zM30 62h1v1h-1zM41 62h1v1h-1zM52 62h1v1h-1zM57 62h1v1h-1zM3 63h1v1h-1zM5 63h1v1h-1zM17 63h1v1h-1zM19 63h1v1h-1zM24 63h1v1h-1zM40 63h1v1h-1zM45 63h1v1h-1zM49 63h1v1h-1zM57 63h1v1h-1zM58 63h1v1h-1z" fill="#fff"/></pattern></defs><path d="M757 590C754 540 765 485 798 428C816 399 842 372 874 354C900 344 940 343 975 346C1005 350 1030 359 1054 373L1054 430L1000 440L886 392L878 420L864 455L848 494L834 512L812 532L788 556L770 576Z" fill="url(#nz)" shape-rendering="crispEdges"/><g fill="none" stroke="#000" stroke-linecap="round"><path d="M876 362C845 382 805 428 786 464" stroke-width="12"/><path d="M852 400C832 425 800 470 784 508" stroke-width="8"/><path d="M784 498C777 515 771 532 767 548" stroke-width="5"/><path d="M886 367C920 371 960 381 1000 392" stroke-width="13"/><path d="M888 394C920 406 960 426 1000 443" stroke-width="10"/><path d="M838 446C825 472 810 498 792 526" stroke-width="3"/><path d="M876 424L863 478" stroke-width="4"/><path d="M882 432L900 480" stroke-width="3"/><path d="M893 418L934 484" stroke-width="2.500"/><path d="M903 422L955 470" stroke-width="2.500"/><path d="M928 435L975 473" stroke-width="2"/><path d="M960 446L1000 472" stroke-width="3"/><path d="M756 592C753 540 764 485 797 427C815 398 840 372 873 353C900 343 940 342 975 345C1005 349 1030 358 1054 372" stroke-width="1.800"/></g><g fill="none" stroke="#fff" stroke-width="1"><path d="M872 372C842 396 808 436 790 470" stroke-dasharray="1 3 3 8 3 2 5 1"/><path d="M848 410C830 436 806 470 790 505" stroke-dasharray="1 5 1 1 2 3 8 2"/><path d="M888 363C925 367 962 376 1000 387" stroke-dasharray="5 8 2 2 8 8 3 2"/><path d="M890 392C925 404 960 421 996 438" stroke-dasharray="2 2 1 8 2 5 1 2"/><path d="M877 430L866 474" stroke-dasharray="2 1 8 1 1 1 8 1"/><path d="M884 438L899 476" stroke-dasharray="5 2 8 1 1 2 1 1"/><path d="M898 425L930 478" stroke-dasharray="1 2 2 1 3 1 1 3"/><path d="M906 426L950 466" stroke-dasharray="5 1 3 1 2 5 1 1"/></g><path d="M826 522l-7 3M830 519l-9-1M911 513l6-2M909 511l7-4M845 509l-2-4M858 503l-1-4M870 500v-4" stroke="#000" stroke-width="1.200" fill="none"/><path d="M826 522L838 517L843 511C855 502 875 498 890 503L903 509L912 513L902 518C895 528 884 535 872 537.500C858 535 845 530 835 524Z" fill="#000"/><path d="M905 660L932 652L1000 650L1000 656L965 665L930 668L917 665Z" fill="#000"/><g fill="none" stroke="#000" stroke-linejoin="round" stroke-linecap="round"><path d="M804 573C820 562 838 555 857 553" stroke-width="1.3"/><path d="M757 590C755 600 757 612 762 625L767 622" stroke-width="2"/><path d="M774 600L768 622C760 640 748 652 745 655" stroke-width="2"/><path d="M767 622C755 645 735 668 715 682C700 694 690 700 680 707C670 715 662 725 655 735C647 745 640 753 635 762C628 772 623 781 620 790C615 800 610 810 607 820C602 830 597 839 592 847C588 854 587 857 585 860C580 860 575 860 570 860C564 860 558 860 552 860C546 861 541 863 537 866C533 869 531 873 531 876C531 880 532 883 535 885C539 888 544 890 550 891C557 892 563 891 570 890C578 889 587 886 595 882C603 878 610 874 615 870C621 864 626 857 630 850C635 842 640 834 645 825C648 818 652 811 655 805C660 795 664 787 667 780C672 768 680 755 695 742C703 735 712 727 720 720C728 713 737 706 745 700C753 694 762 688 770 682C777 678 782 676 788 674C795 671 801 669 808 667" stroke-width="1.6"/><path d="M585 860C580 866 575 871 570 875C566 878 562 879 557 880C554 880 551 879 549 877" stroke-width="1.6"/><path d="M788 675C792 682 797 685 803 688C812 692 822 696 833 700C845 703 858 705 870 707L890 712" stroke-width="2"/><path d="M884 661C900 653 916 646 932 640C938 640 944 642 950 642C953 640 957 637 960 636C972 638 983 641 1000 646" stroke-width="1.3"/><path d="M895 665L917 672" stroke-width="1.5"/><path d="M955 668C940 668 925 670 917 673C905 682 898 696 897 710C897 720 900 728 905 735C910 743 917 750 925 755C933 760 941 764 950 767C955 769 960 770 965 770C975 768 985 764 1000 758" stroke-width="2.8"/><path d="M955 670C948 677 943 683 940 690C936 697 933 703 932 710C932 718 934 725 938 730C944 735 952 738 960 740C972 740 984 739 1000 737" stroke-width="2.5"/><path d="M942 698C948 694 954 692 960 692C965 693 970 696 975 699" stroke-width="1.5"/><path d="M945 732C960 732 980 728 1000 724" stroke-width="1.5"/><path d="M890 712C885 725 877 745 872 760C869 770 868 780 867 802" stroke-width="1.6"/><path d="M890 717L883 737" stroke-width="1.1"/><path d="M892 719L881 743" stroke-width="1.1"/><path d="M893 721L880 749" stroke-width="1.1"/><path d="M895 723L879 754" stroke-width="1.1"/><path d="M896 725L877 760" stroke-width="1.1"/><path d="M898 727L876 766" stroke-width="1.1"/><path d="M899 729L875 772" stroke-width="1.1"/><path d="M901 731L873 778" stroke-width="1.1"/><path d="M902 733L872 784" stroke-width="1.1"/><path d="M903 735L872 787" stroke-width="1.1"/><path d="M905 737L875 784" stroke-width="1.1"/><path d="M906 739L879 781" stroke-width="1.1"/><path d="M908 741L882 778" stroke-width="1.1"/><path d="M909 743L886 776" stroke-width="1.1"/><path d="M911 745L889 773" stroke-width="1.1"/><path d="M912 747L893 770" stroke-width="1.1"/><path d="M914 749L896 767" stroke-width="1.1"/><path d="M915 751L900 764" stroke-width="1.1"/><path d="M868 802C900 795 950 780 1000 758" stroke-width="2"/><path d="M920 762L905 790" stroke-width="1.5"/><path d="M870 802C858 810 848 816 840 821C835 824 830 826 827 828C818 837 810 846 802 856C798 863 796 869 794 876L803 858L815 855L809 885L808 870L818 865L832 838L830 860L845 867L852 855L840 852L845 840L855 832L850 850L867 845L872 832L880 827L895 826C905 828 912 830 920 830C945 826 970 820 1000 814" stroke-width="1.3"/><path d="M887 830C886 840 885 850 884 860C884 865 885 868 887 870C890 870 893 868 894 865C894 862 893 859 892 857L885 858" stroke-width="2"/><path d="M887 872C883 876 879 878 875 879L852 879C848 878 845 876 844 873L845 867" stroke-width="2.2"/><path d="M992 888C990 900 988 912 985 923C980 936 975 948 970 960C965 972 960 984 955 994C948 1008 940 1020 934 1031" stroke-width="2"/><path d="M1081 900C1084 915 1087 928 1090 940C1094 954 1098 967 1102 978C1107 990 1112 1001 1117 1010C1121 1018 1125 1025 1130 1031" stroke-width="2"/><path d="M961 1016L963 1023C968 1025 972 1024 977 1024C985 1023 993 1021 1002 1021C1008 1021 1013 1022 1018 1022.500C1024 1024 1030 1026 1035 1027.500C1041 1028 1046 1028 1052 1028C1058 1027 1063 1026 1068 1025.500C1073 1024 1078 1023 1083 1022.500C1089 1022 1095 1022 1100 1023L1111 1028" stroke-width="1.5"/><path d="M1223 900C1227 905 1231 908 1237 911C1243 913 1249 915 1255 916C1260 917 1264 918 1268 918C1276 917 1283 916 1290 915C1296 914 1302 914 1308 913C1313 911 1317 909 1320 906L1326 900" stroke-width="2"/><path d="M967 543C969 555 975 566 980 576C983 582 987 586 994 588" stroke-width="2.6"/><path d="M927 587C928 580 932 577 938 578C945 580 950 586 958 589C968 592 980 592 990 588" stroke-width="2.6"/><path d="M937 562C929 565 922 569 919 575C917 580 918 585 920 589" stroke-width="1.8"/><path d="M984 572C988 578 992 582 1000 584" stroke-width="2.5"/><path d="M985 520L1000 517M983 528L1000 523" stroke-width="1.5"/><path d="M785 613L786 618M791 634L792 637M797 654L800 657" stroke-width="1"/></g><g fill="none" stroke="#fff" stroke-width="1" stroke-dasharray="1 2 2 3"><path d="M892 719L881 742"/><path d="M894 722L879 753"/><path d="M897 726L877 764"/><path d="M900 729L874 774"/><path d="M902 733L872 785"/><path d="M905 737L875 784"/><path d="M907 740L882 779"/><path d="M910 744L888 774"/><path d="M913 747L894 769"/><path d="M915 751L900 764"/></g></svg><!--SK1--></div>
<div class="abs" style="left:208px;top:140px;width:1px;height:890px;background:repeating-linear-gradient(#000 0 3px,#ff0 3px 7px,#000 7px 8px)"></div>
<div class="abs" style="left:1498px;top:140px;width:15px;height:890px;background:#222"></div>
<div class="abs" style="left:1499px;top:218px;width:13px;height:621px;background:#5c5c5c;border-radius:2px"></div>
<svg style="left:1500px;top:126px" width="13" height="13" viewBox="0 0 13 13"><rect width="13" height="13" rx="1" fill="#bcbcbc"/><circle cx="6" cy="6" r="3.600" fill="#555" stroke="#444" stroke-width="1.500"/><path d="M9 9l3 3" stroke="#444" stroke-width="2"/></svg>
<svg style="left:1499px;top:1031px" width="16" height="16" viewBox="0 0 16 16"><path d="M8 0l7.500 15.500L8 10.500.5 15.500z" fill="#d0d0d0"/></svg>
<div class="abs" style="left:201px;top:1031px;width:1297px;height:15px;background:#222"></div>
<div class="abs" style="left:202px;top:1033px;width:952px;height:12px;background:#5c5c5c;border-radius:2px"></div>
<svg style="left:185px;top:1033px" width="12" height="12" viewBox="0 0 12 12"><rect x="1" y="1" width="10" height="10" fill="#5e5e5e" stroke="#c0c0c0" stroke-width="1.200" stroke-dasharray="2 1.300"/></svg>
<div class="combo" style="left:278px;top:1049px;width:47px;height:28px"></div><div class="t s11" style="left:285px;top:1058px">px</div><svg style="left:306px;top:1059px" width="12" height="8"><use href="#chev"/></svg>
<div class="abs" style="left:326px;top:1049px;width:34px;height:28px;background:#3a3a3a"></div><div class="abs" style="left:328px;top:1057px;width:30px;height:12px;background:#2c2c2c"></div><div class="t s11" style="left:329px;top:1058px;word-spacing:-1px">100 %</div>
<div class="combo" style="left:360px;top:1049px;width:18px;height:28px"></div><svg style="left:363px;top:1059px" width="12" height="8"><use href="#chev"/></svg>
<div class="t" style="left:380px;top:1057px;font-size:13.150px">Babyhead.png (98.5 MB)</div>
</div>
<!--/CANVAS-->
<!--RIGHTDOCK-->
<div id="rdock">
<div class="abs" style="left:1516px;top:63px;width:404px;height:1017px;background:#444"></div>
<div class="abs" style="left:1516px;top:121px;width:1px;height:959px;background:#585858"></div><div class="abs" style="left:1519px;top:87px;width:1px;height:993px;background:#555"></div>
<div class="abs" style="left:1520px;top:67px;width:162px;height:20px;background:#323232"></div>
<div class="abs" style="left:1543px;top:67px;width:1px;height:20px;background:#444"></div>
<div class="abs" style="left:1567px;top:67px;width:1px;height:20px;background:#444"></div>
<div class="abs" style="left:1590px;top:67px;width:1px;height:20px;background:#444"></div>
<div class="abs" style="left:1660px;top:67px;width:1px;height:20px;background:#444"></div>
<div class="abs" style="left:1519px;top:87px;width:401px;height:297px;background:#3a3a3a;border:1px solid #585858"></div>
<div class="abs" style="left:1613px;top:64px;width:24px;height:24px;background:#3a3a3a;border:1px solid #5a5a5a;border-bottom:none"></div>
<div class="abs" style="left:1523px;top:68px;width:18px;height:18px;border:1px solid #000;background:radial-gradient(circle at 8px 8px,#000 0,#222 2px,#fff 7px) #fff"></div>
<svg style="left:1535px;top:80px" width="7" height="7" viewBox="0 0 7 7"><rect width="7" height="7" fill="#a8b8f8" opacity=".6"/><path d="M3.500 0v7M0 3.500h7" stroke="#101060" stroke-width="1.300"/></svg>
<div class="abs" style="left:1547px;top:68px;width:18px;height:18px;border:1px solid #000;background:linear-gradient(90deg,#c85a10,#f89a20 12%,#ffd060 22%,#f8a020 32%,#ffc850 45%,#f8a830 55%,#ffd868 65%,#f8a020 75%,#ffc040 88%,#ffd060)"></div>
<div class="abs" style="left:1571px;top:68px;width:18px;height:18px;border:1px solid #000;background:#fff"></div>
<div class="t b" style="left:1572px;top:71px;font-size:13.150px;color:#000;letter-spacing:-0.5px">Aa</div>
<div class="abs" style="left:1595px;top:69px;width:15px;height:16px;border:1px solid #000;background:#e6f0f8"></div>
<svg style="left:1597px;top:71px" width="6" height="8" viewBox="0 0 6 8"><path d="M4 0L1.500 6" stroke="#5a80a8" stroke-width="1.300"/></svg>
<svg style="left:1616px;top:67px" width="18" height="18" viewBox="0 0 18 18"><path d="M16.500 1c-3 3-6 7-8 11l2 1.500c2.500-3.500 5-8 6-12.500z" fill="#c6c6c6"/><path d="M8 12.500c-2 0-3 1.500-3.500 3-.5 1-1.500 1.500-3 1.500 3.500 1 7.500.5 8.500-3z" fill="#c6c6c6"/></svg>
<div class="abs" style="left:1639px;top:68px;width:18px;height:18px;border:1px solid #000;background:linear-gradient(90deg,#000,rgba(0,0,0,0) 95%),conic-gradient(#777 25%,#555 0 50%,#777 0 75%,#555 0) 0 0/8px 8px"></div>
<svg style="left:1663px;top:69px" width="17" height="16" viewBox="0 0 17 16"><defs><pattern id="pdot" width="4" height="4" patternUnits="userSpaceOnUse"><rect width="4" height="4" fill="#e0e0e0"/><rect width="2" height="2" fill="#111"/><rect x="2" y="2" width="2" height="2" fill="#111"/></pattern></defs><path d="M3 0h11l3 8v8H0V8z" fill="url(#pdot)"/><rect x="0" y="12" width="17" height="4" fill="#d0d0d0"/></svg>
<svg style="left:1904px;top:71px" width="11" height="11"><use href="#menub"/></svg>
<div class="abs" style="left:1524px;top:92px;width:391px;height:16px;background:#222"></div>
<div class="t s11" style="left:1526px;top:95px">2. Hardness 050</div>
<div class="abs" style="left:1523px;top:111px;width:393px;height:135px;background:radial-gradient(circle at 196px 67px,#000 0,#050505 4px,#2a2a2a 8px,#808080 12px,#d0d0d0 16px,#f6f6f6 20px,#fff 23px) #fff"></div>
<svg style="left:1909px;top:239px" width="7" height="7" viewBox="0 0 7 7"><path d="M7 0v7H0z" fill="#6a86f0"/></svg>
<div class="t s11" style="left:1522px;top:255px;color:#b0b0b0">Shape:</div>
<div class="abs" style="left:1558px;top:247px;width:26px;height:26px;background:#2a2a2a;border:1px solid #1c1c1c;border-radius:4px"></div>
<svg style="left:1564px;top:253px" width="70" height="14" viewBox="0 0 70 14"><g fill="#b4b4b4"><circle cx="7" cy="7" r="6.300"/><rect x="27" y="1" width="12" height="12"/><path d="M59 0l7 7-7 7-7-7z"/></g></svg>
<div class="abs" style="left:1523px;top:276px;width:393px;height:14px;background:#383838;border:1px solid #3f3f3f"></div>
<div class="t s11" style="left:1524px;top:278px;color:#505050;z-index:2"><span style="color:#dcdcdc">R</span>adius</div>
<div class="t s11" style="left:1860px;width:42px;text-align:right;top:278px;color:#505050">25.0</div>
<svg style="left:1905px;top:276px;opacity:.5" width="10" height="14"><use href="#spin"/></svg>
<div class="abs" style="left:1523px;top:294px;width:393px;height:14px;background:#383838;border:1px solid #3f3f3f"></div>
<div class="t s11" style="left:1524px;top:296px;color:#505050">Spikes</div>
<div class="t s11" style="left:1860px;width:42px;text-align:right;top:296px;color:#505050">2</div>
<svg style="left:1905px;top:294px;opacity:.5" width="10" height="14"><use href="#spin"/></svg>
<div class="abs" style="left:1523px;top:312px;width:393px;height:14px;background:#383838"></div><div class="abs" style="left:1523px;top:312px;width:190px;height:14px;background:#5a5a5a"></div><div class="abs" style="left:1712px;top:312px;width:1px;height:14px;background:#0a0a0a"></div>
<div class="t s11" style="left:1524px;top:314px">Hardness</div>
<div class="t s11" style="left:1860px;width:42px;text-align:right;top:314px;color:#555">0.50</div>
<svg style="left:1905px;top:312px;opacity:.5" width="10" height="14"><use href="#spin"/></svg>
<div class="abs" style="left:1523px;top:330px;width:393px;height:14px;background:#383838;border:1px solid #3f3f3f"></div>
<div class="t s11" style="left:1524px;top:332px;color:#505050">Aspect ratio</div>
<div class="t s11" style="left:1860px;width:42px;text-align:right;top:332px;color:#505050">1.0</div>
<svg style="left:1905px;top:330px;opacity:.5" width="10" height="14"><use href="#spin"/></svg>
<div class="abs" style="left:1523px;top:348px;width:393px;height:14px;background:#383838;border:1px solid #3f3f3f"></div>
<div class="t s11" style="left:1524px;top:350px;color:#505050">Angle</div>
<div class="t s11" style="left:1860px;width:42px;text-align:right;top:350px;color:#505050">0.0</div>
<svg style="left:1905px;top:348px;opacity:.5" width="10" height="14"><use href="#spin"/></svg>
<div class="abs" style="left:1523px;top:366px;width:393px;height:14px;background:#383838;border:1px solid #3f3f3f"></div>
<div class="t s11" style="left:1524px;top:368px;color:#505050">Spacing</div>
<div class="t s11" style="left:1860px;width:42px;text-align:right;top:368px;color:#505050">10.0</div>
<svg style="left:1905px;top:366px;opacity:.5" width="10" height="14"><use href="#spin"/></svg>
<div class="abs" style="left:1523px;top:277px;width:7px;height:12px;background:#555"></div><div class="abs" style="left:1531px;top:276px;width:1px;height:14px;background:#0a0a0a"></div>
<svg style="left:1710px;top:383px" width="18" height="3" viewBox="0 0 18 3"><path d="M0 1.500h4M7 1.500h4M14 1.500h4" stroke="#b0b0b0" stroke-width="2"/></svg>
<div class="abs" style="left:1579px;top:389px;width:121px;height:21px;background:#323232"></div><div class="abs" style="left:1648px;top:389px;width:1px;height:21px;background:#444"></div>
<div class="abs" style="left:1519px;top:410px;width:401px;height:641px;background:#303030;border:1px solid #585858"></div>
<div class="abs" style="left:1520px;top:386px;width:59px;height:25px;background:#303030;border:1px solid #5a5a5a;border-bottom:none"></div>
<div class="t s11" style="left:1540px;top:394px">Layers</div>
<svg style="left:1581px;top:392px" width="15" height="16" viewBox="0 0 15 16"><rect x=".700" y=".700" width="13.600" height="14.600" rx="1.500" fill="none" stroke="#d0d0d0" stroke-width="1.400"/><path d="M4.500 3v10M7.500 3v10M10.500 3v10" stroke="#d0d0d0" stroke-width="1.500"/></svg>
<div class="t s11" style="left:1598px;top:394px">Channels</div>
<svg style="left:1650px;top:393px" width="16" height="14" viewBox="0 0 16 14"><path d="M1 13c1-7 4-9 7-9s6 2 7 9" fill="none" stroke="#d0d0d0" stroke-width="1.800"/><path d="M0 3.500h16" stroke="#d0d0d0" stroke-width="1.300"/><rect x="0" y="2" width="3" height="3" fill="#d0d0d0"/><rect x="13" y="2" width="3" height="3" fill="#d0d0d0"/><rect x="6" y="1.500" width="4" height="4" fill="#d0d0d0"/></svg>
<div class="t s11" style="left:1668px;top:394px">Paths</div>
<svg style="left:1904px;top:394px" width="11" height="11"><use href="#menub"/></svg>
<div class="combo" style="left:1523px;top:413px;width:347px;height:28px;background:#2a2a2a"></div>
<div class="t s11" style="left:1809px;top:422px">Normal</div><svg style="left:1850px;top:423px" width="12" height="8"><use href="#chev"/></svg>
<div class="combo" style="left:1872px;top:413px;width:45px;height:28px;background:#2a2a2a"></div><svg style="left:1876px;top:419px" width="16" height="16"><use href="#reset"/></svg><svg style="left:1898px;top:423px" width="12" height="8"><use href="#chev"/></svg>
<div class="scale" style="left:1523px;top:442px;width:394px;height:16px"><div class="fill" style="width:381px"></div><div class="cur" style="left:381px"></div><div class="lbl">Opacity</div><div class="val">100.0</div></div><svg style="left:1905px;top:443px" width="10" height="14"><use href="#spin"/></svg>
<div class="t s11" style="left:1523px;top:466px">Lock:</div>
<svg style="left:1553px;top:463px" width="18" height="18" viewBox="0 0 18 18"><path d="M16.500 1c-3 3-6 7-8 11l2 1.500c2.500-3.500 5-8 6-12.500z" fill="#c6c6c6"/><path d="M8 12.500c-2 0-3 1.500-3.500 3-.5 1-1.500 1.500-3 1.500 3.500 1 7.500.5 8.500-3z" fill="#c6c6c6"/></svg>
<svg style="left:1582px;top:464px" width="16" height="16" viewBox="0 0 20 20"><path class="ic" d="M10 1l3.200 3.800h-2.300v4.300h4.300V6.800L19 10l-3.800 3.200v-2.300h-4.300v4.300h2.300L10 19l-3.200-3.800h2.300v-4.300H4.800v2.300L1 10l3.800-3.200v2.300h4.300V4.800H6.800z"/></svg>
<div class="abs" style="left:1609px;top:464px;width:16px;height:16px;background:conic-gradient(#c8c8c8 25%,#6a6a6a 0 50%,#c8c8c8 0 75%,#6a6a6a 0) 0 0/8px 8px"></div>
<div class="abs" style="left:1523px;top:486px;width:393px;height:31px;background:#222"></div>
<svg style="left:1598px;top:488px" width="36" height="27" viewBox="0 0 36 27"><rect width="36" height="27" fill="#fff"/><g transform="translate(2 2)"><rect width="32" height="23" fill="url(#ck4)"/><path d="M14 5c-2 1-3.500 3.500-3 6.500M15.500 5.500c1.500 2 1.500 4.500.5 6.500M8 13c2 1 4 0 5.500-1M14 11c2 .5 3.500 2 4 4M13 15l1 3.500M16 17h2" stroke="#c4c4c4" stroke-width="1.400" fill="none" opacity=".85"/></g></svg>
<div class="t s11" style="left:1638px;top:496px">Babyhead.png</div>
<div class="abs" style="left:1520px;top:1050px;width:400px;height:30px;background:#444"></div>
<div class="abs" style="left:1522px;top:1051px;width:49px;height:26px;background:#2c2c2c;border:1px solid #202020;border-radius:4px"></div>
<svg style="left:1538px;top:1056px" width="16" height="17" viewBox="0 0 16 17"><path d="M7.500 1.500h3l3 3v11.500h-11V8" fill="none" stroke="#d0d0d0" stroke-width="1.300"/><path d="M10.500 1.500v3h3z" fill="#d0d0d0"/><path d="M4 0v8M0 4h8" stroke="#d8d8d8" stroke-width="2.200"/></svg>
<svg style="left:1883px;top:1056px" width="16" height="16" viewBox="0 0 16 16"><rect x="0" y="0" width="16" height="16" rx="1.500" fill="#c6c6c6"/><path d="M3.500 3.500l9 9M12.500 3.500l-9 9" stroke="#484848" stroke-width="2.200"/></svg>
</div>
<!--/RIGHTDOCK-->
<!--DIALOG-->
<div id="dlg">
<div class="abs" style="left:993px;top:371px;width:576px;height:531px;background:#444;border:1px solid #1c1c1c;border-radius:9px 9px 0 0;box-shadow:0 3px 9px rgba(0,0,0,.45);overflow:hidden"><div class="abs" style="left:0;top:0;width:577px;height:36px;background:#222;border-bottom:1px solid #1a1a1a"></div><div class="abs" style="left:0;top:36px;width:577px;height:38px;background:#484848"></div><div class="abs" style="left:0;top:74px;width:577px;height:1px;background:#3c3c3c"></div></div>
<div class="t b" style="left:993px;width:575px;text-align:center;top:383px;font-size:14.670px;color:#fff">New Layer</div>
<svg style="left:1539px;top:378px" width="22" height="22" viewBox="0 0 22 22"><circle cx="11" cy="11" r="11" fill="#383838"/><path d="M7 7l8 8M15 7l-8 8" stroke="#fff" stroke-width="1.500"/></svg>
<svg style="left:996px;top:411px" width="24" height="24" viewBox="0 0 24 24"><path d="M5 1h18l-3 6H2z" fill="#5c5c5c"/><path d="M5 16h18l-3 8H2z" fill="#5c5c5c"/><path d="M5.500 8h18l-4 9.500h-18z" fill="#c8c8c8"/></svg>
<div class="t b" style="left:1026px;top:413px;font-size:16px;color:#e0e0e0">Create a New Layer</div>
<div class="t s11" style="left:1026px;top:432px;color:#d8d8d8">[Babyhead] (imported)-8</div>
<svg style="left:1529px;top:415px" width="34" height="25" viewBox="0 0 34 25"><rect width="34" height="25" fill="#000"/><g transform="translate(1 1)"><rect width="32" height="23" fill="url(#ck4)"/><path d="M14 5c-2 1-3.500 3.500-3 6.500M15.500 5.500c1.500 2 1.500 4.500.5 6.500M8 13c2 1 4 0 5.500-1M14 11c2 .5 3.500 2 4 4M13 15l1 3.500M16 17h2" stroke="#c4c4c4" stroke-width="1.400" fill="none" opacity=".85"/></g></svg>
<div class="t" style="left:1005px;top:464px">Layer name:</div>
<div class="t" style="left:1005px;top:495px">Color tag:</div>
<div class="t" style="left:1005px;top:529px">Mode:</div>
<div class="t" style="left:1005px;top:565px">Blend space:</div>
<div class="t" style="left:1005px;top:599px">Composite space:</div>
<div class="t" style="left:1005px;top:635px">Composite mode:</div>
<div class="t" style="left:1005px;top:663px">Opacity:</div>
<div class="t" style="left:1005px;top:691px">Width:</div>
<div class="t" style="left:1005px;top:721px">Height:</div>
<div class="t" style="left:1005px;top:752px">Offset X:</div>
<div class="t" style="left:1005px;top:782px">Offset Y:</div>
<div class="t" style="left:1005px;top:816px">Fill with:</div>
<div class="entry" style="left:1117px;top:459px;width:234px;height:23px"></div><div class="t" style="left:1121px;top:465px">GreyLayer</div>
<div class="abs" style="left:1117px;top:488px;width:26px;height:26px;background:#262626;border:1px solid #1c1c1c;border-radius:4px"></div>
<svg style="left:1123px;top:494px" width="14" height="14" viewBox="0 0 14 14"><rect x=".700" y=".700" width="12.600" height="12.600" fill="none" stroke="#c8c8c8" stroke-width="1.400"/><path d="M3 3l8 8M11 3l-8 8" stroke="#e8e8e8" stroke-width="1.400"/></svg>
<div class="abs" style="left:1143px;top:488px;width:26px;height:26px;background:#262626;border:1px solid #1c1c1c;border-radius:4px"></div>
<div class="abs" style="left:1148px;top:493px;width:16px;height:16px;background:#5468aa"></div>
<div class="abs" style="left:1169px;top:488px;width:26px;height:26px;background:#262626;border:1px solid #1c1c1c;border-radius:4px"></div>
<div class="abs" style="left:1174px;top:493px;width:16px;height:16px;background:#6d9030"></div>
<div class="abs" style="left:1195px;top:488px;width:26px;height:26px;background:#262626;border:1px solid #1c1c1c;border-radius:4px"></div>
<div class="abs" style="left:1200px;top:493px;width:16px;height:16px;background:#dab92f"></div>
<div class="abs" style="left:1221px;top:488px;width:26px;height:26px;background:#262626;border:1px solid #1c1c1c;border-radius:4px"></div>
<div class="abs" style="left:1226px;top:493px;width:16px;height:16px;background:#e0812a"></div>
<div class="abs" style="left:1247px;top:488px;width:26px;height:26px;background:#262626;border:1px solid #1c1c1c;border-radius:4px"></div>
<div class="abs" style="left:1252px;top:493px;width:16px;height:16px;background:#5a3418"></div>
<div class="abs" style="left:1273px;top:488px;width:26px;height:26px;background:#262626;border:1px solid #1c1c1c;border-radius:4px"></div>
<div class="abs" style="left:1278px;top:493px;width:16px;height:16px;background:#b42a32"></div>
<div class="abs" style="left:1299px;top:488px;width:26px;height:26px;background:#262626;border:1px solid #1c1c1c;border-radius:4px"></div>
<div class="abs" style="left:1304px;top:493px;width:16px;height:16px;background:#6442b0"></div>
<div class="abs" style="left:1325px;top:488px;width:26px;height:26px;background:#262626;border:1px solid #1c1c1c;border-radius:4px"></div>
<div class="abs" style="left:1330px;top:493px;width:16px;height:16px;background:#585858"></div>
<div class="combo" style="left:1117px;top:520px;width:184px;height:30px"></div><div class="t" style="left:1128px;top:529px">Normal</div><svg style="left:1281px;top:531px" width="12" height="8"><use href="#chev"/></svg>
<div class="combo" style="left:1305px;top:520px;width:46px;height:30px"></div><svg style="left:1310px;top:527px" width="16" height="16"><use href="#reset"/></svg><svg style="left:1332px;top:531px" width="12" height="8"><use href="#chev"/></svg>
<div class="combo" style="left:1117px;top:556px;width:234px;height:30px"></div><div class="t" style="left:1128px;top:565px;color:#6e6e6e">Auto</div><svg style="left:1332px;top:567px" width="12" height="8"><use href="#chev"/></svg>
<div class="combo" style="left:1117px;top:590px;width:234px;height:30px"></div><div class="t" style="left:1128px;top:599px;color:#e0e0e0">Auto</div><svg style="left:1332px;top:601px" width="12" height="8"><use href="#chev"/></svg>
<div class="combo" style="left:1117px;top:626px;width:234px;height:30px"></div><div class="t" style="left:1128px;top:635px;color:#e0e0e0">Auto</div><svg style="left:1332px;top:637px" width="12" height="8"><use href="#chev"/></svg>
<div class="scale" style="left:1117px;top:660px;width:234px;height:19px;border-color:#7a7a7a"><div class="fill" style="width:218px"></div><div class="cur" style="left:218px;width:2px"></div><div class="val" style="font-size:13.150px;top:3px;right:15px">100.0</div></div><svg style="left:1339px;top:662px" width="10" height="14" viewBox="0 0 10 14"><path d="M2 5.200l3-3 3 3" fill="none" stroke="#6a6a6a" stroke-width="1.600"/><path d="M2 8.800l3 3 3-3" fill="none" stroke="#d8d8d8" stroke-width="1.600"/></svg>
<div class="entry" style="left:1117px;top:685px;width:179px;height:23px"></div><div class="t" style="left:1121px;top:691px">1754</div>
<div class="abs" style="left:1282px;top:685px;width:14px;height:23px;background:#1e1e1e"></div><div class="abs" style="left:1282px;top:696px;width:14px;height:1px;background:#3a3a3a"></div><svg style="left:1285px;top:689px" width="8" height="16" viewBox="0 0 8 16"><path d="M0 4.500l4-4 4 4zM0 11.500l4 4 4-4z" fill="#d0d0d0"/></svg>
<div class="entry" style="left:1117px;top:713px;width:179px;height:23px"></div><div class="t" style="left:1121px;top:719px">1276</div>
<div class="abs" style="left:1282px;top:713px;width:14px;height:23px;background:#1e1e1e"></div><div class="abs" style="left:1282px;top:724px;width:14px;height:1px;background:#3a3a3a"></div><svg style="left:1285px;top:717px" width="8" height="16" viewBox="0 0 8 16"><path d="M0 4.500l4-4 4 4zM0 11.500l4 4 4-4z" fill="#d0d0d0"/></svg>
<div class="combo" style="left:1300px;top:710px;width:51px;height:30px"></div><div class="t" style="left:1307px;top:720px">px</div><svg style="left:1332px;top:721px" width="12" height="8"><use href="#chev"/></svg>
<div class="entry" style="left:1117px;top:746px;width:179px;height:23px"></div><div class="t" style="left:1121px;top:752px">0</div>
<div class="abs" style="left:1282px;top:746px;width:14px;height:23px;background:#1e1e1e"></div><div class="abs" style="left:1282px;top:757px;width:14px;height:1px;background:#3a3a3a"></div><svg style="left:1285px;top:750px" width="8" height="16" viewBox="0 0 8 16"><path d="M0 4.500l4-4 4 4zM0 11.500l4 4 4-4z" fill="#d0d0d0"/></svg>
<div class="entry" style="left:1117px;top:774px;width:179px;height:23px"></div><div class="t" style="left:1121px;top:780px">0</div>
<div class="abs" style="left:1282px;top:774px;width:14px;height:23px;background:#1e1e1e"></div><div class="abs" style="left:1282px;top:785px;width:14px;height:1px;background:#3a3a3a"></div><svg style="left:1285px;top:778px" width="8" height="16" viewBox="0 0 8 16"><path d="M0 4.500l4-4 4 4zM0 11.500l4 4 4-4z" fill="#d0d0d0"/></svg>
<div class="combo" style="left:1300px;top:771px;width:51px;height:30px"></div><div class="t" style="left:1307px;top:781px">px</div><svg style="left:1332px;top:782px" width="12" height="8"><use href="#chev"/></svg>
<div class="combo" style="left:1117px;top:807px;width:234px;height:30px"></div><div class="abs" style="left:1120px;top:810px;width:228px;height:24px;border:1px dotted #e8e8e8"></div><div class="t" style="left:1128px;top:816px">Transparency</div><svg style="left:1332px;top:818px" width="12" height="8"><use href="#chev"/></svg>
<div class="t b" style="left:1363px;top:461px">Switches</div>
<div class="cb" style="left:1407px;top:480px"></div>
<svg style="left:1407px;top:480px" width="13" height="13" viewBox="0 0 13 13"><path d="M3.300 3.300l6.400 6.400M9.700 3.300l-6.400 6.400" stroke="#fff" stroke-width="2"/></svg>
<div class="t" style="left:1425px;top:481px;color:#8c8c8c">Visible</div>
<div class="cb" style="left:1407px;top:506px"></div>
<div class="t" style="left:1425px;top:507px;color:#e0e0e0">Linked</div>
<div class="cb" style="left:1407px;top:532px"></div>
<div class="t" style="left:1425px;top:533px;color:#e0e0e0">Lock pixels</div>
<div class="cb" style="left:1407px;top:558px"></div>
<div class="t" style="left:1425px;top:559px;color:#e0e0e0">Lock position and size</div>
<div class="cb" style="left:1407px;top:584px"></div>
<div class="t" style="left:1425px;top:585px;color:#e0e0e0">Lock alpha</div>
<svg style="left:1379px;top:480px" width="20" height="14" viewBox="0 0 20 14"><path d="M1 7c2.500-4 6-5.500 9-5.500s6.500 1.500 9 5.500c-2.500 4-6 5.500-9 5.500S3.500 11 1 7z" fill="none" stroke="#c8c8c8" stroke-width="2"/><circle cx="10" cy="6.500" r="3.300" fill="#c8c8c8"/><circle cx="9" cy="5.500" r="1.100" fill="#444"/></svg>
<svg style="left:1384px;top:503px" width="10" height="20"><use href="#chain"/></svg>
<svg style="left:1379px;top:529px" width="20" height="20" viewBox="0 0 18 18"><path d="M16.500 1c-3 3-6 7-8 11l2 1.500c2.500-3.500 5-8 6-12.500z" fill="#c6c6c6"/><path d="M8 12.500c-2 0-3 1.500-3.500 3-.5 1-1.500 1.500-3 1.500 3.500 1 7.500.5 8.500-3z" fill="#c6c6c6"/></svg>
<svg style="left:1378px;top:554px" width="22" height="22" viewBox="0 0 20 20"><path class="ic" d="M10 1l3.200 3.800h-2.300v4.300h4.300V6.800L19 10l-3.800 3.200v-2.300h-4.300v4.300h2.300L10 19l-3.200-3.800h2.300v-4.300H4.800v2.300L1 10l3.800-3.200v2.300h4.300V4.800H6.800z"/></svg>
<div class="abs" style="left:1379px;top:581px;width:20px;height:20px;background:conic-gradient(#c8c8c8 25%,#6a6a6a 0 50%,#c8c8c8 0 75%,#6a6a6a 0) 0 0/10px 10px"></div>
<div class="btn" style="left:1005px;top:861px;width:86px;height:28px;padding-top:7px">Help</div>
<div class="btn" style="left:1380px;top:861px;width:86px;height:28px;padding-top:7px">Cancel</div>
<div class="btn" style="left:1471px;top:861px;width:86px;height:28px;padding-top:7px">OK</div>
</div>
<!--/DIALOG-->
<!--TOOLTIP-->
<div id="tip">
<div class="abs" style="left:1581px;top:1040px;width:282px;height:42px;background:rgba(52,52,52,.93);border:1px solid #6a6a6a;border-radius:4px"></div>
<div class="t" style="left:1585px;top:1046px">Create a new layer and add it to the image</div>
<div class="t" style="left:1585px;top:1062px"><b>Shift</b>&nbsp; Create a new layer with last used values</div>
<svg style="left:1567px;top:1058px" width="14" height="22" viewBox="0 0 14 22"><path d="M1.500 1.500v15.500l3.600-3.400 2.500 5.800 2.300-1-2.500-5.700h5z" fill="#262626" stroke="#fff" stroke-width="1.400" stroke-linejoin="miter"/></svg>
</div>
<!--/TOOLTIP-->
</body>
</html>
